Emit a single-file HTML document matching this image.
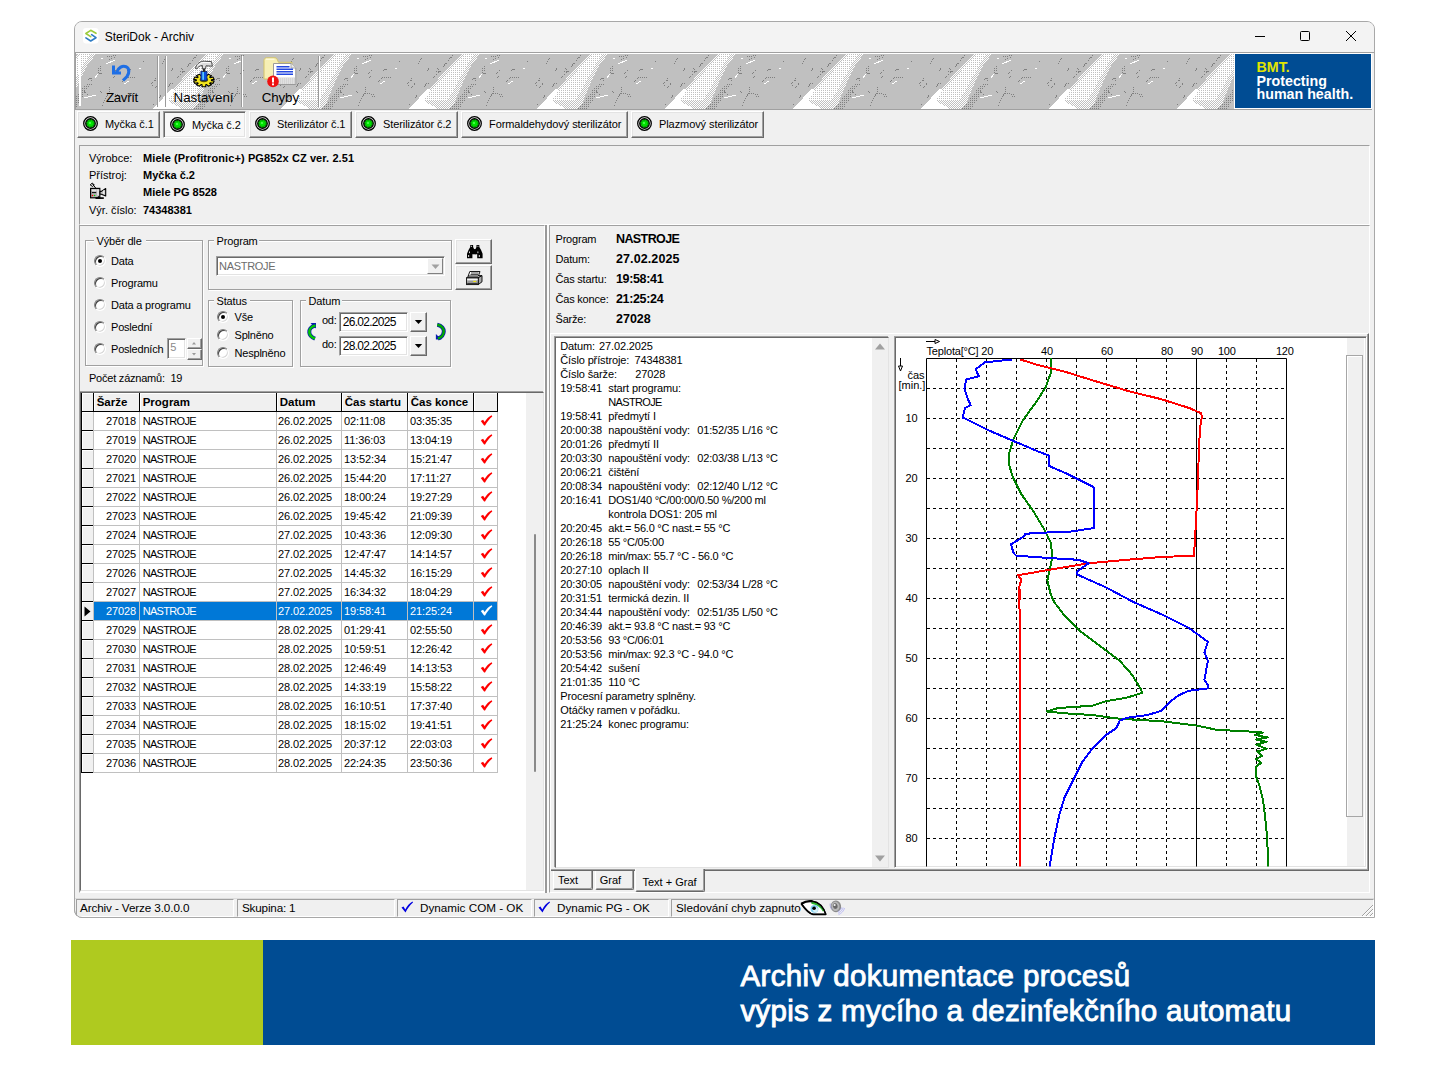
<!DOCTYPE html>
<html lang="cs"><head><meta charset="utf-8"><title>SteriDok - Archiv</title>
<style>
html,body{margin:0;padding:0;background:#fff;}
body{width:1448px;height:1080px;position:relative;overflow:hidden;font-family:"Liberation Sans",sans-serif;font-size:11px;color:#000;}
.t{position:absolute;white-space:pre;line-height:1;}
div{box-sizing:border-box;}
svg{position:absolute;overflow:visible;}
.win{position:absolute;left:74px;top:21px;width:1301px;height:897px;background:#f0f0f0;border:1px solid #a8a8a8;border-radius:8px 8px 0 7px;overflow:hidden;}
.raised{border:1px solid;border-color:#fff #696969 #696969 #fff;box-shadow:inset -1px -1px 0 #a0a0a0, inset 1px 1px 0 #e3e3e3;background:#f0f0f0;}
.sunken{border:1px solid;border-color:#a0a0a0 #fff #fff #a0a0a0;box-shadow:inset 1px 1px 0 #696969, inset -1px -1px 0 #e3e3e3;}
.grp{border:1px solid #a0a0a0;box-shadow:1px 1px 0 #fff, inset 1px 1px 0 #fff;}
.etch{border:1px solid;border-color:#a0a0a0 #fff #fff #a0a0a0;}
.radio{position:absolute;width:12px;height:12px;border-radius:50%;background:#fff;box-sizing:border-box;border:1px solid;border-color:#808080 #fff #fff #808080;box-shadow:inset 1px 1px 0 #404040, inset -1px -1px 0 #d8d8d8;transform:rotate(0deg);}
.radio.on:after{content:"";position:absolute;left:3px;top:3px;width:4px;height:4px;border-radius:50%;background:#000;}

.dfield{background:#fff;border:1px solid;border-color:#a0a0a0 #fff #fff #a0a0a0;box-shadow:inset 1px 1px 0 #696969, inset -1px -1px 0 #e3e3e3;}
.btn3{background:#f0f0f0;border:1px solid;border-color:#fff #696969 #696969 #fff;box-shadow:inset -1px -1px 0 #a0a0a0;}

</style></head>
<body>
<div class="" style="position:absolute;left:71px;top:940px;width:192px;height:105px;background:#afca1f;"></div>
<div class="" style="position:absolute;left:263px;top:940px;width:1112px;height:105px;background:#004c93;"></div>
<span class="t bn1" style="left:740.4px;top:960.53px;font-size:29.5px;letter-spacing:0.37px;color:#fff;-webkit-text-stroke:0.9px #fff;">Archiv dokumentace procesů</span>
<span class="t bn2" style="left:740.4px;top:995.53px;font-size:29.5px;letter-spacing:0.295px;color:#fff;-webkit-text-stroke:0.9px #fff;">výpis z mycího a dezinfekčního automatu</span>
<div class="win"></div>
<div class="" style="position:absolute;left:75px;top:22px;width:1299px;height:31px;background:#f3f3f3;border-radius:7px 7px 0 0;"></div>
<svg style="left:83px;top:28px" width="16" height="16" viewBox="0 0 16 16"><rect x="0" y="0" width="15.500" height="15.500" rx="3" fill="#fff"/><path d="M13 5.300L7.700 2.300L2.900 5.500L7.700 8.700" fill="none" stroke="#9ccc3c" stroke-width="1.600" stroke-linejoin="round" stroke-linecap="round"/><path d="M2.900 9.900L7.700 13L13 9.700L8.600 6.600" fill="none" stroke="#2e7cc4" stroke-width="1.600" stroke-linejoin="round" stroke-linecap="round"/></svg>
<span class="t " style="left:104.7px;top:30.64px;font-size:12px;">SteriDok - Archiv</span>
<svg style="left:1250px;top:26px" width="112" height="22" viewBox="0 0 112 22"><path d="M5 10.5H15" stroke="#000" stroke-width="1"/><rect x="50.5" y="5.5" width="9" height="9" rx="1" fill="none" stroke="#000" stroke-width="1"/><path d="M96 5L106 15M106 5L96 15" stroke="#000" stroke-width="1"/></svg>
<svg style="left:75px;top:54px" width="1299" height="55" viewBox="0 0 1299 55" shape-rendering="crispEdges">
<defs>
<pattern id="chk" width="2" height="2" patternUnits="userSpaceOnUse"><rect width="2" height="2" fill="#c0c0c0"/><rect width="1" height="1" fill="#fff"/><rect x="1" y="1" width="1" height="1" fill="#fff"/></pattern>
<pattern id="chk3" width="2" height="2" patternUnits="userSpaceOnUse"><rect width="2" height="2" fill="#fff"/><rect x="1" y="0" width="1" height="1" fill="#c0c0c0"/></pattern>
<pattern id="chd" width="2" height="2" patternUnits="userSpaceOnUse"><rect width="1" height="1" fill="#808080"/></pattern>
<pattern id="mar" x="69" y="0" width="128" height="55" patternUnits="userSpaceOnUse">
<rect width="128" height="55" fill="#c0c0c0"/>
<polygon points="9,55 14,50 62,0 80,0 71,12 63,28 54,50 50,55" fill="url(#chk)"/>
<polygon points="22,46 64,1 74,1 66,13 58,28 48,46" fill="url(#chk3)"/>
<polygon points="9,55 19,44 27,35 30,36 24,47 38,55" fill="#fff"/>
<polygon points="50,55 57,46 69,30 73,32 66,44 60,55" fill="url(#chd)"/>
<g stroke="#808080" stroke-width="1" fill="none" stroke-dasharray="1 1">
<path d="M18 9.500L23 3M27 17l2-3M33 24l4-4M24 33l3-4 2 1 2-2M43 13l10-12M15 44l2-3M9 51l2-1"/>
<path d="M37 14l3 3-3 3M36 17h5M7 30l4-4 4 4-4 4zM11 24v3"/>
<path d="M82 14v4l3 2 2-2M84 12l1 5M72 26l3-2 1 4M71 30h5M96 20l4-4M97 24l3-3M91 3l10-2M93 6l6-3"/>
<path d="M94 33l-1 5-7 14M93 39l10 2M99 40l2 4 3-2M84 37l2 2M68 37l4 4M111 17l3-2 1 2M127 8l4-1M106 28l4-4 9-1"/>
</g>
<g stroke="#fff" stroke-width="1" fill="none">
<path d="M85 5l2-1M90 10l9-4M79 24l3-4M68 44l12-3M108 30l5-3M123 14l2 1"/>
</g>
</pattern></defs>
<rect width="1299" height="55" fill="url(#mar)"/>
</svg>
<div class="" style="position:absolute;left:75px;top:52px;width:1299px;height:1px;background:#a0a0a0;"></div>
<div class="" style="position:absolute;left:75px;top:53px;width:1299px;height:1px;background:#fff;"></div>
<div class="" style="position:absolute;left:75px;top:109px;width:1299px;height:1px;background:#a0a0a0;"></div>
<div class="" style="position:absolute;left:79px;top:55px;width:2px;height:51px;background:#fff;"></div>
<div class="" style="position:absolute;left:75px;top:53px;width:1px;height:56px;background:#a0a0a0;"></div>
<div class="" style="position:absolute;left:157px;top:56px;width:1px;height:51px;background:#9a9a9a;"></div>
<div class="" style="position:absolute;left:158px;top:56px;width:1px;height:51px;background:#fff;"></div>
<div class="" style="position:absolute;left:165px;top:56px;width:1px;height:51px;background:#9a9a9a;"></div>
<div class="" style="position:absolute;left:166px;top:56px;width:1px;height:51px;background:#fff;"></div>
<div class="" style="position:absolute;left:241px;top:56px;width:1px;height:51px;background:#9a9a9a;"></div>
<div class="" style="position:absolute;left:242px;top:56px;width:1px;height:51px;background:#fff;"></div>
<div class="" style="position:absolute;left:318px;top:56px;width:1px;height:51px;background:#9a9a9a;"></div>
<div class="" style="position:absolute;left:319px;top:56px;width:1px;height:51px;background:#fff;"></div>
<span class="t " style="left:106px;top:91.22px;font-size:13.33px;letter-spacing:-0.35px;">Zavřít</span>
<span class="t " style="left:173.5px;top:91.22px;font-size:13.33px;">Nastavení</span>
<span class="t " style="left:261.7px;top:91.22px;font-size:13.33px;letter-spacing:-0.1px;">Chyby</span>
<svg style="left:111px;top:63px" width="20" height="20" viewBox="0 0 20 20"><path d="M2.500 2.400v7.600h7.500" fill="none" stroke="#1f6fe5" stroke-width="3"/><path d="M5.500 9.500C7.500 4.500 11.500 2.300 15 3.700C18.700 5.300 18.500 10 16 13.500L12 17.500" fill="none" stroke="#1f6fe5" stroke-width="3.100"/></svg>
<svg style="left:192px;top:59px" width="24" height="29" viewBox="0 0 24 29"><polygon points="10.0,14.7 13.8,14.7 13.7,16.6 14.7,16.8 16.3,15.2 19.5,16.7 17.6,18.1 18.3,18.7 21.0,18.0 22.2,20.4 19.4,20.8 19.4,21.6 22.2,22.0 21.0,24.4 18.3,23.7 17.6,24.3 19.5,25.7 16.3,27.2 14.7,25.6 13.7,25.8 13.8,27.7 10.0,27.7 10.1,25.8 9.1,25.6 7.5,27.2 4.3,25.7 6.2,24.3 5.5,23.7 2.8,24.4 1.6,22.0 4.4,21.6 4.4,20.8 1.6,20.4 2.8,18.0 5.5,18.7 6.2,18.1 4.3,16.7 7.5,15.2 9.1,16.8 10.1,16.6" fill="#f4e61e" stroke="#000" stroke-width="1.100" stroke-linejoin="round"/><ellipse cx="11.900" cy="20.800" rx="4.200" ry="2.400" fill="#5a5200"/><rect x="8.900" y="12.500" width="6" height="8.800" fill="#0a50e0" stroke="#06247a" stroke-width=".8"/><rect x="10.300" y="13" width="1.700" height="7.800" fill="#58c8ff"/><rect x="10.800" y="9" width="2.400" height="4" fill="#2a2a2a"/><path d="M3.500 9.500C4 5.500 7 2.800 11 2.200L19.500 2.600L20.400 7.200L14 6.800L13.600 9.800L10.400 9.800L10.400 6.500C8 6.500 5.800 8 4.800 10Z" fill="#dcdcdc" stroke="#3a3a3a" stroke-width=".9" stroke-linejoin="round"/><path d="M6 6.500C7.500 4.500 9.500 3.600 12 3.400L18.500 3.700" fill="none" stroke="#fff" stroke-width="1"/></svg>
<svg style="left:262px;top:56px" width="36" height="30" viewBox="0 0 36 30"><path d="M2 4.500c0-1.600 1-2.700 2.500-2.700h8.500c1.500 0 2 1 2.500 2.500l1 2h13.500v16.700H2z" fill="#f6efb4" stroke="#d4c466" stroke-width="1"/><path d="M4 3.200h8.500" stroke="#fffbe0" stroke-width="1.200"/><path d="M11.500 7.500h17.500l4.800 4.500v16.500H11.500z" fill="#fff" stroke="#9a9a9a" stroke-width="1"/><path d="M29 7.500v4.500h4.800" fill="#e8e8e8" stroke="#9a9a9a" stroke-width=".8"/><path d="M14.500 10.800h13M14.500 13.300h16.500M14.500 15.800h16.500M14.500 18.300h16.500" stroke="#2448e0" stroke-width="1.500"/><rect x="14" y="21.500" width="19" height="6.500" fill="#d4d4d4"/><path d="M15 23h17M15 25h17M15 27h17" stroke="#f4f4f4" stroke-width=".8" stroke-dasharray="1 1"/><circle cx="11" cy="25.400" r="5.800" fill="#ee1111"/><rect x="10" y="21.500" width="2" height="5" fill="#fff"/><rect x="10" y="27.400" width="2" height="1.900" fill="#fff"/></svg>
<div class="" style="position:absolute;left:1234px;top:53px;width:138px;height:56px;background:#004c93;border:1px solid #fff;"></div>
<div class="" style="position:absolute;left:1372px;top:53px;width:2px;height:57px;background:#f0f0f0;"></div>
<span class="t " style="left:1256.5px;top:59.74px;font-size:14.25px;font-weight:bold;color:#e2e600;">BMT.</span>
<span class="t " style="left:1256.5px;top:73.54px;font-size:14.25px;font-weight:bold;color:#fff;">Protecting</span>
<span class="t " style="left:1256.5px;top:87.34px;font-size:14.25px;font-weight:bold;color:#fff;">human health.</span>
<div class="raised" style="position:absolute;left:77px;top:111px;width:83px;height:27px;"></div>
<svg style="left:83px;top:116px" width="15" height="15" viewBox="0 0 15 15"><circle cx="7.500" cy="7.500" r="6.800" fill="#ececec" stroke="#000" stroke-width="1.300"/><circle cx="7.500" cy="7.500" r="4.700" fill="#0a8a0a" stroke="#000" stroke-width="1.400"/><circle cx="7.500" cy="7.500" r="3.500" fill="none" stroke="#00ff00" stroke-width=".9" stroke-dasharray="1.300 1.450"/><circle cx="7.500" cy="7.500" r="2.700" fill="#00e400"/><circle cx="7" cy="7" r="1" fill="#5aff5a"/></svg>
<span class="t " style="left:105px;top:118.69px;font-size:11px;letter-spacing:-0.08px;">Myčka č.1</span>
<div class="sunken" style="position:absolute;left:163px;top:111px;width:83px;height:27px;background:#f8f8f8;"></div>
<svg style="left:170px;top:117px" width="15" height="15" viewBox="0 0 15 15"><circle cx="7.500" cy="7.500" r="6.800" fill="#ececec" stroke="#000" stroke-width="1.300"/><circle cx="7.500" cy="7.500" r="4.700" fill="#0a8a0a" stroke="#000" stroke-width="1.400"/><circle cx="7.500" cy="7.500" r="3.500" fill="none" stroke="#00ff00" stroke-width=".9" stroke-dasharray="1.300 1.450"/><circle cx="7.500" cy="7.500" r="2.700" fill="#00e400"/><circle cx="7" cy="7" r="1" fill="#5aff5a"/></svg>
<span class="t " style="left:192px;top:120.19px;font-size:11px;letter-spacing:-0.08px;">Myčka č.2</span>
<div class="raised" style="position:absolute;left:249px;top:111px;width:103px;height:27px;"></div>
<svg style="left:255px;top:116px" width="15" height="15" viewBox="0 0 15 15"><circle cx="7.500" cy="7.500" r="6.800" fill="#ececec" stroke="#000" stroke-width="1.300"/><circle cx="7.500" cy="7.500" r="4.700" fill="#0a8a0a" stroke="#000" stroke-width="1.400"/><circle cx="7.500" cy="7.500" r="3.500" fill="none" stroke="#00ff00" stroke-width=".9" stroke-dasharray="1.300 1.450"/><circle cx="7.500" cy="7.500" r="2.700" fill="#00e400"/><circle cx="7" cy="7" r="1" fill="#5aff5a"/></svg>
<span class="t " style="left:277px;top:118.69px;font-size:11px;letter-spacing:-0.08px;">Sterilizátor č.1</span>
<div class="raised" style="position:absolute;left:355px;top:111px;width:103px;height:27px;"></div>
<svg style="left:361px;top:116px" width="15" height="15" viewBox="0 0 15 15"><circle cx="7.500" cy="7.500" r="6.800" fill="#ececec" stroke="#000" stroke-width="1.300"/><circle cx="7.500" cy="7.500" r="4.700" fill="#0a8a0a" stroke="#000" stroke-width="1.400"/><circle cx="7.500" cy="7.500" r="3.500" fill="none" stroke="#00ff00" stroke-width=".9" stroke-dasharray="1.300 1.450"/><circle cx="7.500" cy="7.500" r="2.700" fill="#00e400"/><circle cx="7" cy="7" r="1" fill="#5aff5a"/></svg>
<span class="t " style="left:383px;top:118.69px;font-size:11px;letter-spacing:-0.08px;">Sterilizátor č.2</span>
<div class="raised" style="position:absolute;left:461px;top:111px;width:167px;height:27px;"></div>
<svg style="left:467px;top:116px" width="15" height="15" viewBox="0 0 15 15"><circle cx="7.500" cy="7.500" r="6.800" fill="#ececec" stroke="#000" stroke-width="1.300"/><circle cx="7.500" cy="7.500" r="4.700" fill="#0a8a0a" stroke="#000" stroke-width="1.400"/><circle cx="7.500" cy="7.500" r="3.500" fill="none" stroke="#00ff00" stroke-width=".9" stroke-dasharray="1.300 1.450"/><circle cx="7.500" cy="7.500" r="2.700" fill="#00e400"/><circle cx="7" cy="7" r="1" fill="#5aff5a"/></svg>
<span class="t " style="left:489px;top:118.69px;font-size:11px;letter-spacing:-0.08px;">Formaldehydový sterilizátor</span>
<div class="raised" style="position:absolute;left:631px;top:111px;width:133px;height:27px;"></div>
<svg style="left:637px;top:116px" width="15" height="15" viewBox="0 0 15 15"><circle cx="7.500" cy="7.500" r="6.800" fill="#ececec" stroke="#000" stroke-width="1.300"/><circle cx="7.500" cy="7.500" r="4.700" fill="#0a8a0a" stroke="#000" stroke-width="1.400"/><circle cx="7.500" cy="7.500" r="3.500" fill="none" stroke="#00ff00" stroke-width=".9" stroke-dasharray="1.300 1.450"/><circle cx="7.500" cy="7.500" r="2.700" fill="#00e400"/><circle cx="7" cy="7" r="1" fill="#5aff5a"/></svg>
<span class="t " style="left:659px;top:118.69px;font-size:11px;letter-spacing:-0.08px;">Plazmový sterilizátor</span>
<div class="etch" style="position:absolute;left:79px;top:145px;width:1291px;height:80px;"></div>
<span class="t " style="left:89px;top:152.69px;font-size:11px;">Výrobce:</span>
<span class="t " style="left:143px;top:152.69px;font-size:11px;letter-spacing:0.09px;font-weight:bold;">Miele (Profitronic+) PG852x CZ ver. 2.51</span>
<span class="t " style="left:89px;top:169.69px;font-size:11px;">Přístroj:</span>
<span class="t " style="left:143px;top:169.69px;font-size:11px;font-weight:bold;">Myčka č.2</span>
<span class="t " style="left:143px;top:186.69px;font-size:11px;font-weight:bold;">Miele PG 8528</span>
<span class="t " style="left:89px;top:204.69px;font-size:11px;">Výr. číslo:</span>
<span class="t " style="left:143px;top:204.69px;font-size:11px;font-weight:bold;">74348381</span>
<svg style="left:89px;top:182px" width="18" height="18" viewBox="0 0 18 18"><path d="M6.800 6.200L3.400 1.800M1.200 2.900L3.300 1L5.200 3L3.600 4.500z" fill="none" stroke="#000" stroke-width="1"/><rect x="1.600" y="6.400" width="9.200" height="9.400" fill="#b4b4b4" stroke="#000" stroke-width="1.200"/><rect x="2.800" y="7.600" width="4.600" height="1.600" fill="#e4e4e4"/><rect x="8" y="7.400" width="2.200" height="6" fill="#dedede"/><path d="M3 10.600h4.200" stroke="#000" stroke-width="1"/><circle cx="3.500" cy="13.500" r=".8" fill="#f00"/><circle cx="5.600" cy="13.500" r=".8" fill="#0c0"/><path d="M11 9.400h1.400l4.300-2.900v7.400l-4.300-1.700H11z" fill="#c4c4c4" stroke="#000" stroke-width="1.100" stroke-linejoin="round"/><path d="M14.800 8.300v3.800" stroke="#fff" stroke-width="1"/><path d="M6.500 16.100h8.300" stroke="#000" stroke-width="1.700"/><path d="M9 14.500l2 1.500" stroke="#000" stroke-width="1.200"/></svg>
<div class="etch" style="position:absolute;left:79px;top:225px;width:466px;height:668px;"></div>
<div class="" style="position:absolute;left:545px;top:225px;width:2px;height:668px;background:#999;"></div>
<div class="" style="position:absolute;left:547px;top:225px;width:2px;height:668px;background:#fbfbfb;"></div>
<div class="grp" style="position:absolute;left:85px;top:240px;width:118px;height:126px;"></div>
<div class="" style="position:absolute;left:94.0px;top:238px;width:52px;height:5px;background:#f0f0f0;"></div>
<span class="t " style="left:96.5px;top:235.69px;font-size:11px;letter-spacing:-0.15px;">Výběr dle</span>
<div class="radio on" style="left:94px;top:255px"></div>
<span class="t " style="left:111px;top:255.69px;font-size:11px;letter-spacing:-0.2px;">Data</span>
<div class="radio" style="left:94px;top:277px"></div>
<span class="t " style="left:111px;top:277.69px;font-size:11px;letter-spacing:-0.2px;">Programu</span>
<div class="radio" style="left:94px;top:299px"></div>
<span class="t " style="left:111px;top:299.69px;font-size:11px;letter-spacing:-0.2px;">Data a programu</span>
<div class="radio" style="left:94px;top:321px"></div>
<span class="t " style="left:111px;top:321.69px;font-size:11px;letter-spacing:-0.2px;">Poslední</span>
<div class="radio" style="left:94px;top:343px"></div>
<span class="t " style="left:111px;top:343.69px;font-size:11px;letter-spacing:-0.2px;">Posledních</span>
<div class="dfield" style="position:absolute;left:167px;top:338px;width:19px;height:21px;"></div>
<span class="t " style="left:170.3px;top:342.39px;font-size:11px;color:#8a8a8a;">5</span>
<div class="btn3" style="position:absolute;left:187px;top:338px;width:15px;height:11px;"></div>
<div class="btn3" style="position:absolute;left:187px;top:349px;width:15px;height:11px;"></div>
<svg style="left:187px;top:338px" width="15" height="22" viewBox="0 0 15 22"><path d="M5 6.500h4l-2-2.500z" fill="#9a9a9a"/><path d="M5 15h4l-2 2.500z" fill="#9a9a9a"/></svg>
<div class="grp" style="position:absolute;left:208px;top:240px;width:244px;height:50px;"></div>
<div class="" style="position:absolute;left:214.0px;top:238px;width:45px;height:5px;background:#f0f0f0;"></div>
<span class="t " style="left:216.5px;top:235.69px;font-size:11px;letter-spacing:-0.15px;">Program</span>
<div class="dfield" style="position:absolute;left:216px;top:256px;width:229px;height:20px;"></div>
<span class="t " style="left:219px;top:260.69px;font-size:11px;letter-spacing:-0.3px;color:#6d6d6d;">NASTROJE</span>
<div class="" style="position:absolute;left:427px;top:258px;width:16px;height:16px;background:#f0f0f0;border:1px solid;border-color:#fff #808080 #808080 #fff;"></div>
<svg style="left:427px;top:258px" width="16" height="16" viewBox="0 0 16 16"><path d="M4.500 6.500h8l-4 4.500z" fill="#a0a0a0"/></svg>
<div class="raised" style="position:absolute;left:455px;top:239px;width:37px;height:25px;"></div>
<div class="raised" style="position:absolute;left:455px;top:265px;width:37px;height:25px;"></div>
<svg style="left:466.600px;top:244.800px" width="15.600" height="13.200" viewBox="0 0 15.300 12.900"><path d="M3.200 0H6V2L7.400 5V9H5.300V12.900H0V8.500L1.500 5L3.200 2Z" fill="#000"/><path d="M12.100 0H9.300V2L7.900 5V9H10V12.900H15.300V8.500L13.800 5L12.100 2Z" fill="#000"/><rect x="6.500" y="4" width="2.400" height="5" fill="#000"/><rect x="1.200" y="9.800" width=".9" height="1.900" fill="#fff"/><rect x="2.100" y="6.300" width=".8" height="1.700" fill="#fff"/><rect x="4" y=".8" width=".9" height=".9" fill="#fff"/><rect x="11.600" y="9.800" width=".9" height="1.900" fill="#fff"/><rect x="10.300" y="6.300" width=".8" height="1.700" fill="#fff"/><rect x="10.300" y=".8" width=".9" height=".9" fill="#fff"/></svg>
<svg style="left:466px;top:271px" width="17" height="15" viewBox="0 0 17 15"><path d="M.6 6.800L3 4.600H16L12.200 6.800z" fill="#e0e0e0" stroke="#000" stroke-width=".9" stroke-linejoin="round"/><path d="M12.200 6.800L16 4.600V10.800L12.200 13.600z" fill="#a8a8a8" stroke="#000" stroke-width=".9" stroke-linejoin="round"/><rect x=".6" y="6.800" width="11.600" height="6.800" fill="#c4c4c4" stroke="#000" stroke-width=".9"/><path d="M3.800 .5H14L12.400 5H2.200z" fill="#fff" stroke="#000" stroke-width=".9" stroke-linejoin="round"/><path d="M5 2h7.500M4.500 3.500h7.500" stroke="#000" stroke-width=".7"/><path d="M1.200 8.600h10.500" stroke="#fff" stroke-width=".9"/><rect x="1.500" y="9.800" width="9.800" height="1.400" fill="#9a9a9a"/><rect x="7.200" y="9.900" width="2.900" height="1" fill="#f4e800"/><path d="M1.200 12.300h10.500" stroke="#000" stroke-width=".9"/></svg>
<div class="grp" style="position:absolute;left:208px;top:300px;width:85px;height:67px;"></div>
<div class="" style="position:absolute;left:214.0px;top:298px;width:36px;height:5px;background:#f0f0f0;"></div>
<span class="t " style="left:216.5px;top:295.69px;font-size:11px;letter-spacing:-0.15px;">Status</span>
<div class="radio on" style="left:217px;top:311px"></div>
<span class="t " style="left:234.5px;top:311.69px;font-size:11px;letter-spacing:-0.2px;">Vše</span>
<div class="radio" style="left:217px;top:329px"></div>
<span class="t " style="left:234.5px;top:329.69px;font-size:11px;letter-spacing:-0.2px;">Splněno</span>
<div class="radio" style="left:217px;top:347px"></div>
<span class="t " style="left:234.5px;top:347.69px;font-size:11px;letter-spacing:-0.2px;">Nesplněno</span>
<div class="grp" style="position:absolute;left:300px;top:300px;width:151px;height:67px;"></div>
<div class="" style="position:absolute;left:306.0px;top:298px;width:36px;height:5px;background:#f0f0f0;"></div>
<span class="t " style="left:308.5px;top:295.69px;font-size:11px;letter-spacing:-0.15px;">Datum</span>
<span class="t " style="left:322px;top:315.19px;font-size:11px;letter-spacing:-0.3px;">od:</span>
<span class="t " style="left:322px;top:339.19px;font-size:11px;letter-spacing:-0.3px;">do:</span>
<div class="dfield" style="position:absolute;left:339px;top:312px;width:69px;height:20px;"></div>
<span class="t " style="left:342.7px;top:316.34px;font-size:12px;letter-spacing:-0.7px;">26.02.2025</span>
<div class="btn3" style="position:absolute;left:410px;top:312px;width:17px;height:20px;"></div>
<svg style="left:410px;top:312px" width="17" height="20" viewBox="0 0 17 20"><path d="M4.800 8h7.400l-3.700 4z" fill="#000"/></svg>
<div class="dfield" style="position:absolute;left:339px;top:336px;width:69px;height:20px;"></div>
<span class="t " style="left:342.7px;top:340.34px;font-size:12px;letter-spacing:-0.7px;">28.02.2025</span>
<div class="btn3" style="position:absolute;left:410px;top:336px;width:17px;height:20px;"></div>
<svg style="left:410px;top:336px" width="17" height="20" viewBox="0 0 17 20"><path d="M4.800 8h7.400l-3.700 4z" fill="#000"/></svg>
<svg style="left:307px;top:322px" width="11" height="19" viewBox="0 0 11 19"><path d="M3.500 1H9V6.500z" fill="#0a1ab0"/><path d="M8.500 3.500C3.500 4.500 2 8 2.300 10.500C2.600 13.500 5 15.500 8 16.700" fill="none" stroke="#0a1ab0" stroke-width="4"/><path d="M8.500 3.500C3.500 4.500 2 8 2.300 10.500C2.600 13.500 5 15.500 8 16.700" fill="none" stroke="#00c800" stroke-width="2.400"/></svg>
<svg style="left:435px;top:322px" width="11" height="19" viewBox="0 0 11 19"><path d="M.9 12V17.500H6.500z" fill="#0a1ab0"/><path d="M2.300 2.700C7 3.500 9 7 8.800 9.500C8.600 13 6 15.500 3 16.500" fill="none" stroke="#0a1ab0" stroke-width="4"/><path d="M2.300 2.700C7 3.500 9 7 8.800 9.500C8.600 13 6 15.500 3 16.500" fill="none" stroke="#00a800" stroke-width="2.400"/></svg>
<span class="t " style="left:89px;top:373.19px;font-size:11px;letter-spacing:-0.22px;">Počet záznamů:  19</span>
<div class="" style="position:absolute;left:80px;top:392px;width:464px;height:499px;background:#fff;border:1px solid;border-color:#696969 #e3e3e3 #e3e3e3 #696969;box-shadow:-1px -1px 0 #a0a0a0, 1px 1px 0 #fff;"></div>
<div class="" style="position:absolute;left:526px;top:393px;width:17px;height:497px;background:#f0f0f0;"></div>
<div class="" style="position:absolute;left:534px;top:534px;width:2px;height:238px;background:#8a8a8a;border-radius:1px;"></div>
<div class="" style="position:absolute;left:81px;top:393px;width:13px;height:19px;background:#f0f0f0;border:1px solid #000;border-top:0;box-shadow:inset 1px 1px 0 #fff;"></div>
<div class="" style="position:absolute;left:93px;top:393px;width:47px;height:19px;background:#f0f0f0;border:1px solid #000;border-top:0;box-shadow:inset 1px 1px 0 #fff;"></div>
<span class="t " style="left:96.7px;top:396.57px;font-size:11.5px;font-weight:bold;">Šarže</span>
<div class="" style="position:absolute;left:139px;top:393px;width:138px;height:19px;background:#f0f0f0;border:1px solid #000;border-top:0;box-shadow:inset 1px 1px 0 #fff;"></div>
<span class="t " style="left:142.7px;top:396.57px;font-size:11.5px;font-weight:bold;">Program</span>
<div class="" style="position:absolute;left:276px;top:393px;width:66px;height:19px;background:#f0f0f0;border:1px solid #000;border-top:0;box-shadow:inset 1px 1px 0 #fff;"></div>
<span class="t " style="left:279.7px;top:396.57px;font-size:11.5px;font-weight:bold;">Datum</span>
<div class="" style="position:absolute;left:341px;top:393px;width:67px;height:19px;background:#f0f0f0;border:1px solid #000;border-top:0;box-shadow:inset 1px 1px 0 #fff;"></div>
<span class="t " style="left:344.7px;top:396.57px;font-size:11.5px;font-weight:bold;">Čas startu</span>
<div class="" style="position:absolute;left:407px;top:393px;width:67px;height:19px;background:#f0f0f0;border:1px solid #000;border-top:0;box-shadow:inset 1px 1px 0 #fff;"></div>
<span class="t " style="left:410.7px;top:396.57px;font-size:11.5px;font-weight:bold;">Čas konce</span>
<div class="" style="position:absolute;left:473px;top:393px;width:25px;height:19px;background:#f0f0f0;border:1px solid #000;border-top:0;box-shadow:inset 1px 1px 0 #fff;"></div>
<div class="" style="position:absolute;left:81px;top:411px;width:13px;height:20px;background:#f0f0f0;border:1px solid #000;box-shadow:inset 1px 1px 0 #fff;"></div>
<div class="" style="position:absolute;left:93px;top:411px;width:47px;height:20px;border:1px solid #c0c0c0;border-top-color:#c0c0c0;"></div>
<div class="" style="position:absolute;left:139px;top:411px;width:138px;height:20px;border:1px solid #c0c0c0;border-top-color:#c0c0c0;"></div>
<div class="" style="position:absolute;left:276px;top:411px;width:66px;height:20px;border:1px solid #c0c0c0;border-top-color:#c0c0c0;"></div>
<div class="" style="position:absolute;left:341px;top:411px;width:67px;height:20px;border:1px solid #c0c0c0;border-top-color:#c0c0c0;"></div>
<div class="" style="position:absolute;left:407px;top:411px;width:67px;height:20px;border:1px solid #c0c0c0;border-top-color:#c0c0c0;"></div>
<div class="" style="position:absolute;left:473px;top:411px;width:25px;height:20px;border:1px solid #c0c0c0;border-top-color:#c0c0c0;"></div>
<span class="t " style="left:136px;top:415.69px;font-size:11px;letter-spacing:-0.1px;transform:translateX(-100%);">27018</span>
<span class="t " style="left:142.7px;top:415.69px;font-size:11px;letter-spacing:-0.68px;">NASTROJE</span>
<span class="t " style="left:278px;top:415.69px;font-size:11px;letter-spacing:-0.1px;">26.02.2025</span>
<span class="t " style="left:344px;top:415.69px;font-size:11px;letter-spacing:-0.1px;">02:11:08</span>
<span class="t " style="left:410px;top:415.69px;font-size:11px;letter-spacing:-0.1px;">03:35:35</span>
<svg style="left:479.500px;top:414.8px" width="12.600" height="10.600" viewBox="0 0 13 12" preserveAspectRatio="none"><path d="M0.800 6.800l2.400-1.500 1.600 2.600C6.500 4.500 9 1.800 12 0.200l0.700 1.400C9.800 4 7.500 7.500 5.200 11.800h-1z" fill="#f00"/></svg>
<div class="" style="position:absolute;left:81px;top:430px;width:13px;height:20px;background:#f0f0f0;border:1px solid #000;box-shadow:inset 1px 1px 0 #fff;"></div>
<div class="" style="position:absolute;left:93px;top:430px;width:47px;height:20px;border:1px solid #c0c0c0;border-top-color:#c0c0c0;"></div>
<div class="" style="position:absolute;left:139px;top:430px;width:138px;height:20px;border:1px solid #c0c0c0;border-top-color:#c0c0c0;"></div>
<div class="" style="position:absolute;left:276px;top:430px;width:66px;height:20px;border:1px solid #c0c0c0;border-top-color:#c0c0c0;"></div>
<div class="" style="position:absolute;left:341px;top:430px;width:67px;height:20px;border:1px solid #c0c0c0;border-top-color:#c0c0c0;"></div>
<div class="" style="position:absolute;left:407px;top:430px;width:67px;height:20px;border:1px solid #c0c0c0;border-top-color:#c0c0c0;"></div>
<div class="" style="position:absolute;left:473px;top:430px;width:25px;height:20px;border:1px solid #c0c0c0;border-top-color:#c0c0c0;"></div>
<span class="t " style="left:136px;top:434.69px;font-size:11px;letter-spacing:-0.1px;transform:translateX(-100%);">27019</span>
<span class="t " style="left:142.7px;top:434.69px;font-size:11px;letter-spacing:-0.68px;">NASTROJE</span>
<span class="t " style="left:278px;top:434.69px;font-size:11px;letter-spacing:-0.1px;">26.02.2025</span>
<span class="t " style="left:344px;top:434.69px;font-size:11px;letter-spacing:-0.1px;">11:36:03</span>
<span class="t " style="left:410px;top:434.69px;font-size:11px;letter-spacing:-0.1px;">13:04:19</span>
<svg style="left:479.500px;top:433.8px" width="12.600" height="10.600" viewBox="0 0 13 12" preserveAspectRatio="none"><path d="M0.800 6.800l2.400-1.500 1.600 2.600C6.500 4.500 9 1.800 12 0.200l0.700 1.400C9.800 4 7.500 7.500 5.200 11.800h-1z" fill="#f00"/></svg>
<div class="" style="position:absolute;left:81px;top:449px;width:13px;height:20px;background:#f0f0f0;border:1px solid #000;box-shadow:inset 1px 1px 0 #fff;"></div>
<div class="" style="position:absolute;left:93px;top:449px;width:47px;height:20px;border:1px solid #c0c0c0;border-top-color:#c0c0c0;"></div>
<div class="" style="position:absolute;left:139px;top:449px;width:138px;height:20px;border:1px solid #c0c0c0;border-top-color:#c0c0c0;"></div>
<div class="" style="position:absolute;left:276px;top:449px;width:66px;height:20px;border:1px solid #c0c0c0;border-top-color:#c0c0c0;"></div>
<div class="" style="position:absolute;left:341px;top:449px;width:67px;height:20px;border:1px solid #c0c0c0;border-top-color:#c0c0c0;"></div>
<div class="" style="position:absolute;left:407px;top:449px;width:67px;height:20px;border:1px solid #c0c0c0;border-top-color:#c0c0c0;"></div>
<div class="" style="position:absolute;left:473px;top:449px;width:25px;height:20px;border:1px solid #c0c0c0;border-top-color:#c0c0c0;"></div>
<span class="t " style="left:136px;top:453.69px;font-size:11px;letter-spacing:-0.1px;transform:translateX(-100%);">27020</span>
<span class="t " style="left:142.7px;top:453.69px;font-size:11px;letter-spacing:-0.68px;">NASTROJE</span>
<span class="t " style="left:278px;top:453.69px;font-size:11px;letter-spacing:-0.1px;">26.02.2025</span>
<span class="t " style="left:344px;top:453.69px;font-size:11px;letter-spacing:-0.1px;">13:52:34</span>
<span class="t " style="left:410px;top:453.69px;font-size:11px;letter-spacing:-0.1px;">15:21:47</span>
<svg style="left:479.500px;top:452.8px" width="12.600" height="10.600" viewBox="0 0 13 12" preserveAspectRatio="none"><path d="M0.800 6.800l2.400-1.500 1.600 2.600C6.500 4.500 9 1.800 12 0.200l0.700 1.400C9.800 4 7.500 7.500 5.200 11.800h-1z" fill="#f00"/></svg>
<div class="" style="position:absolute;left:81px;top:468px;width:13px;height:20px;background:#f0f0f0;border:1px solid #000;box-shadow:inset 1px 1px 0 #fff;"></div>
<div class="" style="position:absolute;left:93px;top:468px;width:47px;height:20px;border:1px solid #c0c0c0;border-top-color:#c0c0c0;"></div>
<div class="" style="position:absolute;left:139px;top:468px;width:138px;height:20px;border:1px solid #c0c0c0;border-top-color:#c0c0c0;"></div>
<div class="" style="position:absolute;left:276px;top:468px;width:66px;height:20px;border:1px solid #c0c0c0;border-top-color:#c0c0c0;"></div>
<div class="" style="position:absolute;left:341px;top:468px;width:67px;height:20px;border:1px solid #c0c0c0;border-top-color:#c0c0c0;"></div>
<div class="" style="position:absolute;left:407px;top:468px;width:67px;height:20px;border:1px solid #c0c0c0;border-top-color:#c0c0c0;"></div>
<div class="" style="position:absolute;left:473px;top:468px;width:25px;height:20px;border:1px solid #c0c0c0;border-top-color:#c0c0c0;"></div>
<span class="t " style="left:136px;top:472.69px;font-size:11px;letter-spacing:-0.1px;transform:translateX(-100%);">27021</span>
<span class="t " style="left:142.7px;top:472.69px;font-size:11px;letter-spacing:-0.68px;">NASTROJE</span>
<span class="t " style="left:278px;top:472.69px;font-size:11px;letter-spacing:-0.1px;">26.02.2025</span>
<span class="t " style="left:344px;top:472.69px;font-size:11px;letter-spacing:-0.1px;">15:44:20</span>
<span class="t " style="left:410px;top:472.69px;font-size:11px;letter-spacing:-0.1px;">17:11:27</span>
<svg style="left:479.500px;top:471.8px" width="12.600" height="10.600" viewBox="0 0 13 12" preserveAspectRatio="none"><path d="M0.800 6.800l2.400-1.500 1.600 2.600C6.500 4.500 9 1.800 12 0.200l0.700 1.400C9.800 4 7.500 7.500 5.200 11.800h-1z" fill="#f00"/></svg>
<div class="" style="position:absolute;left:81px;top:487px;width:13px;height:20px;background:#f0f0f0;border:1px solid #000;box-shadow:inset 1px 1px 0 #fff;"></div>
<div class="" style="position:absolute;left:93px;top:487px;width:47px;height:20px;border:1px solid #c0c0c0;border-top-color:#c0c0c0;"></div>
<div class="" style="position:absolute;left:139px;top:487px;width:138px;height:20px;border:1px solid #c0c0c0;border-top-color:#c0c0c0;"></div>
<div class="" style="position:absolute;left:276px;top:487px;width:66px;height:20px;border:1px solid #c0c0c0;border-top-color:#c0c0c0;"></div>
<div class="" style="position:absolute;left:341px;top:487px;width:67px;height:20px;border:1px solid #c0c0c0;border-top-color:#c0c0c0;"></div>
<div class="" style="position:absolute;left:407px;top:487px;width:67px;height:20px;border:1px solid #c0c0c0;border-top-color:#c0c0c0;"></div>
<div class="" style="position:absolute;left:473px;top:487px;width:25px;height:20px;border:1px solid #c0c0c0;border-top-color:#c0c0c0;"></div>
<span class="t " style="left:136px;top:491.69px;font-size:11px;letter-spacing:-0.1px;transform:translateX(-100%);">27022</span>
<span class="t " style="left:142.7px;top:491.69px;font-size:11px;letter-spacing:-0.68px;">NASTROJE</span>
<span class="t " style="left:278px;top:491.69px;font-size:11px;letter-spacing:-0.1px;">26.02.2025</span>
<span class="t " style="left:344px;top:491.69px;font-size:11px;letter-spacing:-0.1px;">18:00:24</span>
<span class="t " style="left:410px;top:491.69px;font-size:11px;letter-spacing:-0.1px;">19:27:29</span>
<svg style="left:479.500px;top:490.8px" width="12.600" height="10.600" viewBox="0 0 13 12" preserveAspectRatio="none"><path d="M0.800 6.800l2.400-1.500 1.600 2.600C6.500 4.500 9 1.800 12 0.200l0.700 1.400C9.800 4 7.500 7.500 5.200 11.800h-1z" fill="#f00"/></svg>
<div class="" style="position:absolute;left:81px;top:506px;width:13px;height:20px;background:#f0f0f0;border:1px solid #000;box-shadow:inset 1px 1px 0 #fff;"></div>
<div class="" style="position:absolute;left:93px;top:506px;width:47px;height:20px;border:1px solid #c0c0c0;border-top-color:#c0c0c0;"></div>
<div class="" style="position:absolute;left:139px;top:506px;width:138px;height:20px;border:1px solid #c0c0c0;border-top-color:#c0c0c0;"></div>
<div class="" style="position:absolute;left:276px;top:506px;width:66px;height:20px;border:1px solid #c0c0c0;border-top-color:#c0c0c0;"></div>
<div class="" style="position:absolute;left:341px;top:506px;width:67px;height:20px;border:1px solid #c0c0c0;border-top-color:#c0c0c0;"></div>
<div class="" style="position:absolute;left:407px;top:506px;width:67px;height:20px;border:1px solid #c0c0c0;border-top-color:#c0c0c0;"></div>
<div class="" style="position:absolute;left:473px;top:506px;width:25px;height:20px;border:1px solid #c0c0c0;border-top-color:#c0c0c0;"></div>
<span class="t " style="left:136px;top:510.69px;font-size:11px;letter-spacing:-0.1px;transform:translateX(-100%);">27023</span>
<span class="t " style="left:142.7px;top:510.69px;font-size:11px;letter-spacing:-0.68px;">NASTROJE</span>
<span class="t " style="left:278px;top:510.69px;font-size:11px;letter-spacing:-0.1px;">26.02.2025</span>
<span class="t " style="left:344px;top:510.69px;font-size:11px;letter-spacing:-0.1px;">19:45:42</span>
<span class="t " style="left:410px;top:510.69px;font-size:11px;letter-spacing:-0.1px;">21:09:39</span>
<svg style="left:479.500px;top:509.8px" width="12.600" height="10.600" viewBox="0 0 13 12" preserveAspectRatio="none"><path d="M0.800 6.800l2.400-1.500 1.600 2.600C6.500 4.500 9 1.800 12 0.200l0.700 1.400C9.800 4 7.500 7.500 5.200 11.800h-1z" fill="#f00"/></svg>
<div class="" style="position:absolute;left:81px;top:525px;width:13px;height:20px;background:#f0f0f0;border:1px solid #000;box-shadow:inset 1px 1px 0 #fff;"></div>
<div class="" style="position:absolute;left:93px;top:525px;width:47px;height:20px;border:1px solid #c0c0c0;border-top-color:#c0c0c0;"></div>
<div class="" style="position:absolute;left:139px;top:525px;width:138px;height:20px;border:1px solid #c0c0c0;border-top-color:#c0c0c0;"></div>
<div class="" style="position:absolute;left:276px;top:525px;width:66px;height:20px;border:1px solid #c0c0c0;border-top-color:#c0c0c0;"></div>
<div class="" style="position:absolute;left:341px;top:525px;width:67px;height:20px;border:1px solid #c0c0c0;border-top-color:#c0c0c0;"></div>
<div class="" style="position:absolute;left:407px;top:525px;width:67px;height:20px;border:1px solid #c0c0c0;border-top-color:#c0c0c0;"></div>
<div class="" style="position:absolute;left:473px;top:525px;width:25px;height:20px;border:1px solid #c0c0c0;border-top-color:#c0c0c0;"></div>
<span class="t " style="left:136px;top:529.69px;font-size:11px;letter-spacing:-0.1px;transform:translateX(-100%);">27024</span>
<span class="t " style="left:142.7px;top:529.69px;font-size:11px;letter-spacing:-0.68px;">NASTROJE</span>
<span class="t " style="left:278px;top:529.69px;font-size:11px;letter-spacing:-0.1px;">27.02.2025</span>
<span class="t " style="left:344px;top:529.69px;font-size:11px;letter-spacing:-0.1px;">10:43:36</span>
<span class="t " style="left:410px;top:529.69px;font-size:11px;letter-spacing:-0.1px;">12:09:30</span>
<svg style="left:479.500px;top:528.8px" width="12.600" height="10.600" viewBox="0 0 13 12" preserveAspectRatio="none"><path d="M0.800 6.800l2.400-1.500 1.600 2.600C6.500 4.500 9 1.800 12 0.200l0.700 1.400C9.800 4 7.500 7.500 5.200 11.800h-1z" fill="#f00"/></svg>
<div class="" style="position:absolute;left:81px;top:544px;width:13px;height:20px;background:#f0f0f0;border:1px solid #000;box-shadow:inset 1px 1px 0 #fff;"></div>
<div class="" style="position:absolute;left:93px;top:544px;width:47px;height:20px;border:1px solid #c0c0c0;border-top-color:#c0c0c0;"></div>
<div class="" style="position:absolute;left:139px;top:544px;width:138px;height:20px;border:1px solid #c0c0c0;border-top-color:#c0c0c0;"></div>
<div class="" style="position:absolute;left:276px;top:544px;width:66px;height:20px;border:1px solid #c0c0c0;border-top-color:#c0c0c0;"></div>
<div class="" style="position:absolute;left:341px;top:544px;width:67px;height:20px;border:1px solid #c0c0c0;border-top-color:#c0c0c0;"></div>
<div class="" style="position:absolute;left:407px;top:544px;width:67px;height:20px;border:1px solid #c0c0c0;border-top-color:#c0c0c0;"></div>
<div class="" style="position:absolute;left:473px;top:544px;width:25px;height:20px;border:1px solid #c0c0c0;border-top-color:#c0c0c0;"></div>
<span class="t " style="left:136px;top:548.69px;font-size:11px;letter-spacing:-0.1px;transform:translateX(-100%);">27025</span>
<span class="t " style="left:142.7px;top:548.69px;font-size:11px;letter-spacing:-0.68px;">NASTROJE</span>
<span class="t " style="left:278px;top:548.69px;font-size:11px;letter-spacing:-0.1px;">27.02.2025</span>
<span class="t " style="left:344px;top:548.69px;font-size:11px;letter-spacing:-0.1px;">12:47:47</span>
<span class="t " style="left:410px;top:548.69px;font-size:11px;letter-spacing:-0.1px;">14:14:57</span>
<svg style="left:479.500px;top:547.8px" width="12.600" height="10.600" viewBox="0 0 13 12" preserveAspectRatio="none"><path d="M0.800 6.800l2.400-1.500 1.600 2.600C6.500 4.500 9 1.800 12 0.200l0.700 1.400C9.800 4 7.500 7.500 5.200 11.800h-1z" fill="#f00"/></svg>
<div class="" style="position:absolute;left:81px;top:563px;width:13px;height:20px;background:#f0f0f0;border:1px solid #000;box-shadow:inset 1px 1px 0 #fff;"></div>
<div class="" style="position:absolute;left:93px;top:563px;width:47px;height:20px;border:1px solid #c0c0c0;border-top-color:#c0c0c0;"></div>
<div class="" style="position:absolute;left:139px;top:563px;width:138px;height:20px;border:1px solid #c0c0c0;border-top-color:#c0c0c0;"></div>
<div class="" style="position:absolute;left:276px;top:563px;width:66px;height:20px;border:1px solid #c0c0c0;border-top-color:#c0c0c0;"></div>
<div class="" style="position:absolute;left:341px;top:563px;width:67px;height:20px;border:1px solid #c0c0c0;border-top-color:#c0c0c0;"></div>
<div class="" style="position:absolute;left:407px;top:563px;width:67px;height:20px;border:1px solid #c0c0c0;border-top-color:#c0c0c0;"></div>
<div class="" style="position:absolute;left:473px;top:563px;width:25px;height:20px;border:1px solid #c0c0c0;border-top-color:#c0c0c0;"></div>
<span class="t " style="left:136px;top:567.69px;font-size:11px;letter-spacing:-0.1px;transform:translateX(-100%);">27026</span>
<span class="t " style="left:142.7px;top:567.69px;font-size:11px;letter-spacing:-0.68px;">NASTROJE</span>
<span class="t " style="left:278px;top:567.69px;font-size:11px;letter-spacing:-0.1px;">27.02.2025</span>
<span class="t " style="left:344px;top:567.69px;font-size:11px;letter-spacing:-0.1px;">14:45:32</span>
<span class="t " style="left:410px;top:567.69px;font-size:11px;letter-spacing:-0.1px;">16:15:29</span>
<svg style="left:479.500px;top:566.8px" width="12.600" height="10.600" viewBox="0 0 13 12" preserveAspectRatio="none"><path d="M0.800 6.800l2.400-1.500 1.600 2.600C6.500 4.500 9 1.800 12 0.200l0.700 1.400C9.800 4 7.500 7.500 5.200 11.800h-1z" fill="#f00"/></svg>
<div class="" style="position:absolute;left:81px;top:582px;width:13px;height:20px;background:#f0f0f0;border:1px solid #000;box-shadow:inset 1px 1px 0 #fff;"></div>
<div class="" style="position:absolute;left:93px;top:582px;width:47px;height:20px;border:1px solid #c0c0c0;border-top-color:#c0c0c0;"></div>
<div class="" style="position:absolute;left:139px;top:582px;width:138px;height:20px;border:1px solid #c0c0c0;border-top-color:#c0c0c0;"></div>
<div class="" style="position:absolute;left:276px;top:582px;width:66px;height:20px;border:1px solid #c0c0c0;border-top-color:#c0c0c0;"></div>
<div class="" style="position:absolute;left:341px;top:582px;width:67px;height:20px;border:1px solid #c0c0c0;border-top-color:#c0c0c0;"></div>
<div class="" style="position:absolute;left:407px;top:582px;width:67px;height:20px;border:1px solid #c0c0c0;border-top-color:#c0c0c0;"></div>
<div class="" style="position:absolute;left:473px;top:582px;width:25px;height:20px;border:1px solid #c0c0c0;border-top-color:#c0c0c0;"></div>
<span class="t " style="left:136px;top:586.69px;font-size:11px;letter-spacing:-0.1px;transform:translateX(-100%);">27027</span>
<span class="t " style="left:142.7px;top:586.69px;font-size:11px;letter-spacing:-0.68px;">NASTROJE</span>
<span class="t " style="left:278px;top:586.69px;font-size:11px;letter-spacing:-0.1px;">27.02.2025</span>
<span class="t " style="left:344px;top:586.69px;font-size:11px;letter-spacing:-0.1px;">16:34:32</span>
<span class="t " style="left:410px;top:586.69px;font-size:11px;letter-spacing:-0.1px;">18:04:29</span>
<svg style="left:479.500px;top:585.8px" width="12.600" height="10.600" viewBox="0 0 13 12" preserveAspectRatio="none"><path d="M0.800 6.800l2.400-1.500 1.600 2.600C6.500 4.500 9 1.800 12 0.200l0.700 1.400C9.800 4 7.500 7.500 5.200 11.800h-1z" fill="#f00"/></svg>
<div class="" style="position:absolute;left:81px;top:601px;width:13px;height:20px;background:#f0f0f0;border:1px solid #000;box-shadow:inset 1px 1px 0 #fff;"></div>
<svg style="left:84px;top:606px" width="7" height="11" viewBox="0 0 7 11"><path d="M0.500 0.500v10l6-5z" fill="#000"/></svg>
<div class="" style="position:absolute;left:94px;top:602px;width:403px;height:18px;background:#0078d7;"></div>
<div class="" style="position:absolute;left:93px;top:601px;width:47px;height:20px;border:1px solid #c0c0c0;border-top-color:#c0c0c0;"></div>
<div class="" style="position:absolute;left:139px;top:601px;width:138px;height:20px;border:1px solid #c0c0c0;border-top-color:#c0c0c0;"></div>
<div class="" style="position:absolute;left:276px;top:601px;width:66px;height:20px;border:1px solid #c0c0c0;border-top-color:#c0c0c0;"></div>
<div class="" style="position:absolute;left:341px;top:601px;width:67px;height:20px;border:1px solid #c0c0c0;border-top-color:#c0c0c0;"></div>
<div class="" style="position:absolute;left:407px;top:601px;width:67px;height:20px;border:1px solid #c0c0c0;border-top-color:#c0c0c0;"></div>
<div class="" style="position:absolute;left:473px;top:601px;width:25px;height:20px;border:1px solid #c0c0c0;border-top-color:#c0c0c0;"></div>
<span class="t " style="left:136px;top:605.69px;font-size:11px;letter-spacing:-0.1px;color:#fff;transform:translateX(-100%);">27028</span>
<span class="t " style="left:142.7px;top:605.69px;font-size:11px;letter-spacing:-0.68px;color:#fff;">NASTROJE</span>
<span class="t " style="left:278px;top:605.69px;font-size:11px;letter-spacing:-0.1px;color:#fff;">27.02.2025</span>
<span class="t " style="left:344px;top:605.69px;font-size:11px;letter-spacing:-0.1px;color:#fff;">19:58:41</span>
<span class="t " style="left:410px;top:605.69px;font-size:11px;letter-spacing:-0.1px;color:#fff;">21:25:24</span>
<svg style="left:479.500px;top:604.8px" width="12.600" height="10.600" viewBox="0 0 13 12" preserveAspectRatio="none"><path d="M0.800 6.800l2.400-1.500 1.600 2.600C6.500 4.500 9 1.800 12 0.200l0.700 1.400C9.800 4 7.500 7.500 5.200 11.800h-1z" fill="#fff"/></svg>
<div class="" style="position:absolute;left:81px;top:620px;width:13px;height:20px;background:#f0f0f0;border:1px solid #000;box-shadow:inset 1px 1px 0 #fff;"></div>
<div class="" style="position:absolute;left:93px;top:620px;width:47px;height:20px;border:1px solid #c0c0c0;border-top-color:#c0c0c0;"></div>
<div class="" style="position:absolute;left:139px;top:620px;width:138px;height:20px;border:1px solid #c0c0c0;border-top-color:#c0c0c0;"></div>
<div class="" style="position:absolute;left:276px;top:620px;width:66px;height:20px;border:1px solid #c0c0c0;border-top-color:#c0c0c0;"></div>
<div class="" style="position:absolute;left:341px;top:620px;width:67px;height:20px;border:1px solid #c0c0c0;border-top-color:#c0c0c0;"></div>
<div class="" style="position:absolute;left:407px;top:620px;width:67px;height:20px;border:1px solid #c0c0c0;border-top-color:#c0c0c0;"></div>
<div class="" style="position:absolute;left:473px;top:620px;width:25px;height:20px;border:1px solid #c0c0c0;border-top-color:#c0c0c0;"></div>
<span class="t " style="left:136px;top:624.69px;font-size:11px;letter-spacing:-0.1px;transform:translateX(-100%);">27029</span>
<span class="t " style="left:142.7px;top:624.69px;font-size:11px;letter-spacing:-0.68px;">NASTROJE</span>
<span class="t " style="left:278px;top:624.69px;font-size:11px;letter-spacing:-0.1px;">28.02.2025</span>
<span class="t " style="left:344px;top:624.69px;font-size:11px;letter-spacing:-0.1px;">01:29:41</span>
<span class="t " style="left:410px;top:624.69px;font-size:11px;letter-spacing:-0.1px;">02:55:50</span>
<svg style="left:479.500px;top:623.8px" width="12.600" height="10.600" viewBox="0 0 13 12" preserveAspectRatio="none"><path d="M0.800 6.800l2.400-1.500 1.600 2.600C6.500 4.500 9 1.800 12 0.200l0.700 1.400C9.800 4 7.500 7.500 5.200 11.800h-1z" fill="#f00"/></svg>
<div class="" style="position:absolute;left:81px;top:639px;width:13px;height:20px;background:#f0f0f0;border:1px solid #000;box-shadow:inset 1px 1px 0 #fff;"></div>
<div class="" style="position:absolute;left:93px;top:639px;width:47px;height:20px;border:1px solid #c0c0c0;border-top-color:#c0c0c0;"></div>
<div class="" style="position:absolute;left:139px;top:639px;width:138px;height:20px;border:1px solid #c0c0c0;border-top-color:#c0c0c0;"></div>
<div class="" style="position:absolute;left:276px;top:639px;width:66px;height:20px;border:1px solid #c0c0c0;border-top-color:#c0c0c0;"></div>
<div class="" style="position:absolute;left:341px;top:639px;width:67px;height:20px;border:1px solid #c0c0c0;border-top-color:#c0c0c0;"></div>
<div class="" style="position:absolute;left:407px;top:639px;width:67px;height:20px;border:1px solid #c0c0c0;border-top-color:#c0c0c0;"></div>
<div class="" style="position:absolute;left:473px;top:639px;width:25px;height:20px;border:1px solid #c0c0c0;border-top-color:#c0c0c0;"></div>
<span class="t " style="left:136px;top:643.69px;font-size:11px;letter-spacing:-0.1px;transform:translateX(-100%);">27030</span>
<span class="t " style="left:142.7px;top:643.69px;font-size:11px;letter-spacing:-0.68px;">NASTROJE</span>
<span class="t " style="left:278px;top:643.69px;font-size:11px;letter-spacing:-0.1px;">28.02.2025</span>
<span class="t " style="left:344px;top:643.69px;font-size:11px;letter-spacing:-0.1px;">10:59:51</span>
<span class="t " style="left:410px;top:643.69px;font-size:11px;letter-spacing:-0.1px;">12:26:42</span>
<svg style="left:479.500px;top:642.8px" width="12.600" height="10.600" viewBox="0 0 13 12" preserveAspectRatio="none"><path d="M0.800 6.800l2.400-1.500 1.600 2.600C6.500 4.500 9 1.800 12 0.200l0.700 1.400C9.800 4 7.500 7.500 5.200 11.800h-1z" fill="#f00"/></svg>
<div class="" style="position:absolute;left:81px;top:658px;width:13px;height:20px;background:#f0f0f0;border:1px solid #000;box-shadow:inset 1px 1px 0 #fff;"></div>
<div class="" style="position:absolute;left:93px;top:658px;width:47px;height:20px;border:1px solid #c0c0c0;border-top-color:#c0c0c0;"></div>
<div class="" style="position:absolute;left:139px;top:658px;width:138px;height:20px;border:1px solid #c0c0c0;border-top-color:#c0c0c0;"></div>
<div class="" style="position:absolute;left:276px;top:658px;width:66px;height:20px;border:1px solid #c0c0c0;border-top-color:#c0c0c0;"></div>
<div class="" style="position:absolute;left:341px;top:658px;width:67px;height:20px;border:1px solid #c0c0c0;border-top-color:#c0c0c0;"></div>
<div class="" style="position:absolute;left:407px;top:658px;width:67px;height:20px;border:1px solid #c0c0c0;border-top-color:#c0c0c0;"></div>
<div class="" style="position:absolute;left:473px;top:658px;width:25px;height:20px;border:1px solid #c0c0c0;border-top-color:#c0c0c0;"></div>
<span class="t " style="left:136px;top:662.69px;font-size:11px;letter-spacing:-0.1px;transform:translateX(-100%);">27031</span>
<span class="t " style="left:142.7px;top:662.69px;font-size:11px;letter-spacing:-0.68px;">NASTROJE</span>
<span class="t " style="left:278px;top:662.69px;font-size:11px;letter-spacing:-0.1px;">28.02.2025</span>
<span class="t " style="left:344px;top:662.69px;font-size:11px;letter-spacing:-0.1px;">12:46:49</span>
<span class="t " style="left:410px;top:662.69px;font-size:11px;letter-spacing:-0.1px;">14:13:53</span>
<svg style="left:479.500px;top:661.8px" width="12.600" height="10.600" viewBox="0 0 13 12" preserveAspectRatio="none"><path d="M0.800 6.800l2.400-1.500 1.600 2.600C6.500 4.500 9 1.800 12 0.200l0.700 1.400C9.800 4 7.500 7.500 5.200 11.800h-1z" fill="#f00"/></svg>
<div class="" style="position:absolute;left:81px;top:677px;width:13px;height:20px;background:#f0f0f0;border:1px solid #000;box-shadow:inset 1px 1px 0 #fff;"></div>
<div class="" style="position:absolute;left:93px;top:677px;width:47px;height:20px;border:1px solid #c0c0c0;border-top-color:#c0c0c0;"></div>
<div class="" style="position:absolute;left:139px;top:677px;width:138px;height:20px;border:1px solid #c0c0c0;border-top-color:#c0c0c0;"></div>
<div class="" style="position:absolute;left:276px;top:677px;width:66px;height:20px;border:1px solid #c0c0c0;border-top-color:#c0c0c0;"></div>
<div class="" style="position:absolute;left:341px;top:677px;width:67px;height:20px;border:1px solid #c0c0c0;border-top-color:#c0c0c0;"></div>
<div class="" style="position:absolute;left:407px;top:677px;width:67px;height:20px;border:1px solid #c0c0c0;border-top-color:#c0c0c0;"></div>
<div class="" style="position:absolute;left:473px;top:677px;width:25px;height:20px;border:1px solid #c0c0c0;border-top-color:#c0c0c0;"></div>
<span class="t " style="left:136px;top:681.69px;font-size:11px;letter-spacing:-0.1px;transform:translateX(-100%);">27032</span>
<span class="t " style="left:142.7px;top:681.69px;font-size:11px;letter-spacing:-0.68px;">NASTROJE</span>
<span class="t " style="left:278px;top:681.69px;font-size:11px;letter-spacing:-0.1px;">28.02.2025</span>
<span class="t " style="left:344px;top:681.69px;font-size:11px;letter-spacing:-0.1px;">14:33:19</span>
<span class="t " style="left:410px;top:681.69px;font-size:11px;letter-spacing:-0.1px;">15:58:22</span>
<svg style="left:479.500px;top:680.8px" width="12.600" height="10.600" viewBox="0 0 13 12" preserveAspectRatio="none"><path d="M0.800 6.800l2.400-1.500 1.600 2.600C6.500 4.500 9 1.800 12 0.200l0.700 1.400C9.800 4 7.500 7.500 5.200 11.800h-1z" fill="#f00"/></svg>
<div class="" style="position:absolute;left:81px;top:696px;width:13px;height:20px;background:#f0f0f0;border:1px solid #000;box-shadow:inset 1px 1px 0 #fff;"></div>
<div class="" style="position:absolute;left:93px;top:696px;width:47px;height:20px;border:1px solid #c0c0c0;border-top-color:#c0c0c0;"></div>
<div class="" style="position:absolute;left:139px;top:696px;width:138px;height:20px;border:1px solid #c0c0c0;border-top-color:#c0c0c0;"></div>
<div class="" style="position:absolute;left:276px;top:696px;width:66px;height:20px;border:1px solid #c0c0c0;border-top-color:#c0c0c0;"></div>
<div class="" style="position:absolute;left:341px;top:696px;width:67px;height:20px;border:1px solid #c0c0c0;border-top-color:#c0c0c0;"></div>
<div class="" style="position:absolute;left:407px;top:696px;width:67px;height:20px;border:1px solid #c0c0c0;border-top-color:#c0c0c0;"></div>
<div class="" style="position:absolute;left:473px;top:696px;width:25px;height:20px;border:1px solid #c0c0c0;border-top-color:#c0c0c0;"></div>
<span class="t " style="left:136px;top:700.69px;font-size:11px;letter-spacing:-0.1px;transform:translateX(-100%);">27033</span>
<span class="t " style="left:142.7px;top:700.69px;font-size:11px;letter-spacing:-0.68px;">NASTROJE</span>
<span class="t " style="left:278px;top:700.69px;font-size:11px;letter-spacing:-0.1px;">28.02.2025</span>
<span class="t " style="left:344px;top:700.69px;font-size:11px;letter-spacing:-0.1px;">16:10:51</span>
<span class="t " style="left:410px;top:700.69px;font-size:11px;letter-spacing:-0.1px;">17:37:40</span>
<svg style="left:479.500px;top:699.8px" width="12.600" height="10.600" viewBox="0 0 13 12" preserveAspectRatio="none"><path d="M0.800 6.800l2.400-1.500 1.600 2.600C6.500 4.500 9 1.800 12 0.200l0.700 1.400C9.800 4 7.500 7.500 5.200 11.800h-1z" fill="#f00"/></svg>
<div class="" style="position:absolute;left:81px;top:715px;width:13px;height:20px;background:#f0f0f0;border:1px solid #000;box-shadow:inset 1px 1px 0 #fff;"></div>
<div class="" style="position:absolute;left:93px;top:715px;width:47px;height:20px;border:1px solid #c0c0c0;border-top-color:#c0c0c0;"></div>
<div class="" style="position:absolute;left:139px;top:715px;width:138px;height:20px;border:1px solid #c0c0c0;border-top-color:#c0c0c0;"></div>
<div class="" style="position:absolute;left:276px;top:715px;width:66px;height:20px;border:1px solid #c0c0c0;border-top-color:#c0c0c0;"></div>
<div class="" style="position:absolute;left:341px;top:715px;width:67px;height:20px;border:1px solid #c0c0c0;border-top-color:#c0c0c0;"></div>
<div class="" style="position:absolute;left:407px;top:715px;width:67px;height:20px;border:1px solid #c0c0c0;border-top-color:#c0c0c0;"></div>
<div class="" style="position:absolute;left:473px;top:715px;width:25px;height:20px;border:1px solid #c0c0c0;border-top-color:#c0c0c0;"></div>
<span class="t " style="left:136px;top:719.69px;font-size:11px;letter-spacing:-0.1px;transform:translateX(-100%);">27034</span>
<span class="t " style="left:142.7px;top:719.69px;font-size:11px;letter-spacing:-0.68px;">NASTROJE</span>
<span class="t " style="left:278px;top:719.69px;font-size:11px;letter-spacing:-0.1px;">28.02.2025</span>
<span class="t " style="left:344px;top:719.69px;font-size:11px;letter-spacing:-0.1px;">18:15:02</span>
<span class="t " style="left:410px;top:719.69px;font-size:11px;letter-spacing:-0.1px;">19:41:51</span>
<svg style="left:479.500px;top:718.8px" width="12.600" height="10.600" viewBox="0 0 13 12" preserveAspectRatio="none"><path d="M0.800 6.800l2.400-1.500 1.600 2.600C6.500 4.500 9 1.800 12 0.200l0.700 1.400C9.800 4 7.500 7.500 5.200 11.800h-1z" fill="#f00"/></svg>
<div class="" style="position:absolute;left:81px;top:734px;width:13px;height:20px;background:#f0f0f0;border:1px solid #000;box-shadow:inset 1px 1px 0 #fff;"></div>
<div class="" style="position:absolute;left:93px;top:734px;width:47px;height:20px;border:1px solid #c0c0c0;border-top-color:#c0c0c0;"></div>
<div class="" style="position:absolute;left:139px;top:734px;width:138px;height:20px;border:1px solid #c0c0c0;border-top-color:#c0c0c0;"></div>
<div class="" style="position:absolute;left:276px;top:734px;width:66px;height:20px;border:1px solid #c0c0c0;border-top-color:#c0c0c0;"></div>
<div class="" style="position:absolute;left:341px;top:734px;width:67px;height:20px;border:1px solid #c0c0c0;border-top-color:#c0c0c0;"></div>
<div class="" style="position:absolute;left:407px;top:734px;width:67px;height:20px;border:1px solid #c0c0c0;border-top-color:#c0c0c0;"></div>
<div class="" style="position:absolute;left:473px;top:734px;width:25px;height:20px;border:1px solid #c0c0c0;border-top-color:#c0c0c0;"></div>
<span class="t " style="left:136px;top:738.69px;font-size:11px;letter-spacing:-0.1px;transform:translateX(-100%);">27035</span>
<span class="t " style="left:142.7px;top:738.69px;font-size:11px;letter-spacing:-0.68px;">NASTROJE</span>
<span class="t " style="left:278px;top:738.69px;font-size:11px;letter-spacing:-0.1px;">28.02.2025</span>
<span class="t " style="left:344px;top:738.69px;font-size:11px;letter-spacing:-0.1px;">20:37:12</span>
<span class="t " style="left:410px;top:738.69px;font-size:11px;letter-spacing:-0.1px;">22:03:03</span>
<svg style="left:479.500px;top:737.8px" width="12.600" height="10.600" viewBox="0 0 13 12" preserveAspectRatio="none"><path d="M0.800 6.800l2.400-1.500 1.600 2.600C6.500 4.500 9 1.800 12 0.200l0.700 1.400C9.800 4 7.500 7.500 5.200 11.800h-1z" fill="#f00"/></svg>
<div class="" style="position:absolute;left:81px;top:753px;width:13px;height:20px;background:#f0f0f0;border:1px solid #000;box-shadow:inset 1px 1px 0 #fff;"></div>
<div class="" style="position:absolute;left:93px;top:753px;width:47px;height:20px;border:1px solid #c0c0c0;border-top-color:#c0c0c0;"></div>
<div class="" style="position:absolute;left:139px;top:753px;width:138px;height:20px;border:1px solid #c0c0c0;border-top-color:#c0c0c0;"></div>
<div class="" style="position:absolute;left:276px;top:753px;width:66px;height:20px;border:1px solid #c0c0c0;border-top-color:#c0c0c0;"></div>
<div class="" style="position:absolute;left:341px;top:753px;width:67px;height:20px;border:1px solid #c0c0c0;border-top-color:#c0c0c0;"></div>
<div class="" style="position:absolute;left:407px;top:753px;width:67px;height:20px;border:1px solid #c0c0c0;border-top-color:#c0c0c0;"></div>
<div class="" style="position:absolute;left:473px;top:753px;width:25px;height:20px;border:1px solid #c0c0c0;border-top-color:#c0c0c0;"></div>
<span class="t " style="left:136px;top:757.69px;font-size:11px;letter-spacing:-0.1px;transform:translateX(-100%);">27036</span>
<span class="t " style="left:142.7px;top:757.69px;font-size:11px;letter-spacing:-0.68px;">NASTROJE</span>
<span class="t " style="left:278px;top:757.69px;font-size:11px;letter-spacing:-0.1px;">28.02.2025</span>
<span class="t " style="left:344px;top:757.69px;font-size:11px;letter-spacing:-0.1px;">22:24:35</span>
<span class="t " style="left:410px;top:757.69px;font-size:11px;letter-spacing:-0.1px;">23:50:36</span>
<svg style="left:479.500px;top:756.8px" width="12.600" height="10.600" viewBox="0 0 13 12" preserveAspectRatio="none"><path d="M0.800 6.800l2.400-1.500 1.600 2.600C6.500 4.500 9 1.800 12 0.200l0.700 1.400C9.800 4 7.500 7.500 5.200 11.800h-1z" fill="#f00"/></svg>
<div class="" style="position:absolute;left:93px;top:411px;width:405px;height:1px;background:#000;"></div>
<div class="etch" style="position:absolute;left:549px;top:225px;width:821px;height:668px;"></div>
<span class="t " style="left:555.5px;top:233.69px;font-size:11px;letter-spacing:-0.2px;">Program</span>
<span class="t " style="left:616px;top:233.42px;font-size:12.5px;letter-spacing:-0.6px;font-weight:bold;">NASTROJE</span>
<span class="t " style="left:555.5px;top:253.69px;font-size:11px;letter-spacing:-0.2px;">Datum:</span>
<span class="t " style="left:616px;top:253.42px;font-size:12.5px;letter-spacing:0.1px;font-weight:bold;">27.02.2025</span>
<span class="t " style="left:555.5px;top:273.69px;font-size:11px;letter-spacing:-0.2px;">Čas startu:</span>
<span class="t " style="left:616px;top:273.42px;font-size:12.5px;letter-spacing:-0.35px;font-weight:bold;">19:58:41</span>
<span class="t " style="left:555.5px;top:293.69px;font-size:11px;letter-spacing:-0.2px;">Čas konce:</span>
<span class="t " style="left:616px;top:293.42px;font-size:12.5px;letter-spacing:-0.35px;font-weight:bold;">21:25:24</span>
<span class="t " style="left:555.5px;top:313.69px;font-size:11px;letter-spacing:-0.2px;">Šarže:</span>
<span class="t " style="left:616px;top:313.42px;font-size:12.5px;font-weight:bold;">27028</span>
<div class="" style="position:absolute;left:550px;top:333px;width:819px;height:538px;border:1px solid;border-color:#fff #696969 transparent #fff;box-shadow:inset -1px 0 0 #a0a0a0;"></div>
<div class="" style="position:absolute;left:555px;top:337px;width:334px;height:531px;background:#fff;border:1px solid;border-color:#696969 #e3e3e3 #e3e3e3 #696969;box-shadow:-1px -1px 0 #a0a0a0;"></div>
<div class="" style="position:absolute;left:872px;top:338px;width:16px;height:529px;background:#f0f0f0;"></div>
<svg style="left:875px;top:343px" width="10" height="7" viewBox="0 0 10 7"><path d="M0 6.500h10l-5-6z" fill="#a0a0a0"/></svg>
<svg style="left:875px;top:855px" width="10" height="7" viewBox="0 0 10 7"><path d="M0 0.500h10l-5 6z" fill="#a0a0a0"/></svg>
<span class="t " style="left:560.3px;top:340.59px;font-size:11px;letter-spacing:-0.13px;">Datum:</span>
<span class="t " style="left:599px;top:340.59px;font-size:11px;letter-spacing:-0.13px;">27.02.2025</span>
<span class="t " style="left:560.3px;top:354.59px;font-size:11px;letter-spacing:-0.13px;">Číslo přístroje:</span>
<span class="t " style="left:634.5px;top:354.59px;font-size:11px;letter-spacing:-0.13px;">74348381</span>
<span class="t " style="left:560.3px;top:368.59px;font-size:11px;letter-spacing:-0.13px;">Číslo šarže:</span>
<span class="t " style="left:635.3px;top:368.59px;font-size:11px;letter-spacing:-0.13px;">27028</span>
<span class="t " style="left:560.3px;top:382.59px;font-size:11px;letter-spacing:-0.13px;">19:58:41</span>
<span class="t " style="left:608.3px;top:382.59px;font-size:11px;letter-spacing:-0.13px;">start programu:</span>
<span class="t " style="left:608.3px;top:396.59px;font-size:11px;letter-spacing:-0.65px;">NASTROJE</span>
<span class="t " style="left:560.3px;top:410.59px;font-size:11px;letter-spacing:-0.13px;">19:58:41</span>
<span class="t " style="left:608.3px;top:410.59px;font-size:11px;letter-spacing:-0.13px;">předmytí I</span>
<span class="t " style="left:560.3px;top:424.59px;font-size:11px;letter-spacing:-0.13px;">20:00:38</span>
<span class="t " style="left:608.3px;top:424.59px;font-size:11px;letter-spacing:-0.13px;">napouštění vody:</span>
<span class="t " style="left:697.2px;top:424.59px;font-size:11px;letter-spacing:-0.13px;">01:52/35 L/16 °C</span>
<span class="t " style="left:560.3px;top:438.59px;font-size:11px;letter-spacing:-0.13px;">20:01:26</span>
<span class="t " style="left:608.3px;top:438.59px;font-size:11px;letter-spacing:-0.13px;">předmytí II</span>
<span class="t " style="left:560.3px;top:452.59px;font-size:11px;letter-spacing:-0.13px;">20:03:30</span>
<span class="t " style="left:608.3px;top:452.59px;font-size:11px;letter-spacing:-0.13px;">napouštění vody:</span>
<span class="t " style="left:697.2px;top:452.59px;font-size:11px;letter-spacing:-0.13px;">02:03/38 L/13 °C</span>
<span class="t " style="left:560.3px;top:466.59px;font-size:11px;letter-spacing:-0.13px;">20:06:21</span>
<span class="t " style="left:608.3px;top:466.59px;font-size:11px;letter-spacing:-0.13px;">čištění</span>
<span class="t " style="left:560.3px;top:480.59px;font-size:11px;letter-spacing:-0.13px;">20:08:34</span>
<span class="t " style="left:608.3px;top:480.59px;font-size:11px;letter-spacing:-0.13px;">napouštění vody:</span>
<span class="t " style="left:697.2px;top:480.59px;font-size:11px;letter-spacing:-0.13px;">02:12/40 L/12 °C</span>
<span class="t " style="left:560.3px;top:494.59px;font-size:11px;letter-spacing:-0.13px;">20:16:41</span>
<span class="t " style="left:608.3px;top:494.59px;font-size:11px;letter-spacing:-0.24px;">DOS1/40 °C/00:00/0.50 %/200 ml</span>
<span class="t " style="left:608.3px;top:508.59px;font-size:11px;letter-spacing:-0.13px;">kontrola DOS1: 205 ml</span>
<span class="t " style="left:560.3px;top:522.59px;font-size:11px;letter-spacing:-0.13px;">20:20:45</span>
<span class="t " style="left:608.3px;top:522.59px;font-size:11px;letter-spacing:-0.24px;">akt.= 56.0 °C nast.= 55 °C</span>
<span class="t " style="left:560.3px;top:536.59px;font-size:11px;letter-spacing:-0.13px;">20:26:18</span>
<span class="t " style="left:608.3px;top:536.59px;font-size:11px;letter-spacing:-0.24px;">55 °C/05:00</span>
<span class="t " style="left:560.3px;top:550.59px;font-size:11px;letter-spacing:-0.13px;">20:26:18</span>
<span class="t " style="left:608.3px;top:550.59px;font-size:11px;letter-spacing:-0.24px;">min/max: 55.7 °C - 56.0 °C</span>
<span class="t " style="left:560.3px;top:564.59px;font-size:11px;letter-spacing:-0.13px;">20:27:10</span>
<span class="t " style="left:608.3px;top:564.59px;font-size:11px;letter-spacing:-0.13px;">oplach II</span>
<span class="t " style="left:560.3px;top:578.59px;font-size:11px;letter-spacing:-0.13px;">20:30:05</span>
<span class="t " style="left:608.3px;top:578.59px;font-size:11px;letter-spacing:-0.13px;">napouštění vody:</span>
<span class="t " style="left:697.2px;top:578.59px;font-size:11px;letter-spacing:-0.13px;">02:53/34 L/28 °C</span>
<span class="t " style="left:560.3px;top:592.59px;font-size:11px;letter-spacing:-0.13px;">20:31:51</span>
<span class="t " style="left:608.3px;top:592.59px;font-size:11px;letter-spacing:-0.13px;">termická dezin. II</span>
<span class="t " style="left:560.3px;top:606.59px;font-size:11px;letter-spacing:-0.13px;">20:34:44</span>
<span class="t " style="left:608.3px;top:606.59px;font-size:11px;letter-spacing:-0.13px;">napouštění vody:</span>
<span class="t " style="left:697.2px;top:606.59px;font-size:11px;letter-spacing:-0.13px;">02:51/35 L/50 °C</span>
<span class="t " style="left:560.3px;top:620.59px;font-size:11px;letter-spacing:-0.13px;">20:46:39</span>
<span class="t " style="left:608.3px;top:620.59px;font-size:11px;letter-spacing:-0.24px;">akt.= 93.8 °C nast.= 93 °C</span>
<span class="t " style="left:560.3px;top:634.59px;font-size:11px;letter-spacing:-0.13px;">20:53:56</span>
<span class="t " style="left:608.3px;top:634.59px;font-size:11px;letter-spacing:-0.24px;">93 °C/06:01</span>
<span class="t " style="left:560.3px;top:648.59px;font-size:11px;letter-spacing:-0.13px;">20:53:56</span>
<span class="t " style="left:608.3px;top:648.59px;font-size:11px;letter-spacing:-0.24px;">min/max: 92.3 °C - 94.0 °C</span>
<span class="t " style="left:560.3px;top:662.59px;font-size:11px;letter-spacing:-0.13px;">20:54:42</span>
<span class="t " style="left:608.3px;top:662.59px;font-size:11px;letter-spacing:-0.13px;">sušení</span>
<span class="t " style="left:560.3px;top:676.59px;font-size:11px;letter-spacing:-0.13px;">21:01:35</span>
<span class="t " style="left:608.3px;top:676.59px;font-size:11px;letter-spacing:-0.24px;">110 °C</span>
<span class="t " style="left:560.3px;top:690.59px;font-size:11px;letter-spacing:-0.13px;">Procesní parametry splněny.</span>
<span class="t " style="left:560.3px;top:704.59px;font-size:11px;letter-spacing:-0.13px;">Otáčky ramen v pořádku.</span>
<span class="t " style="left:560.3px;top:718.59px;font-size:11px;letter-spacing:-0.13px;">21:25:24</span>
<span class="t " style="left:608.3px;top:718.59px;font-size:11px;letter-spacing:-0.13px;">konec programu:</span>
<div class="" style="position:absolute;left:894px;top:336px;width:473px;height:532px;background:#fff;border:1px solid;border-color:#a0a0a0 #fff #fff #a0a0a0;box-shadow:inset 1px 1px 0 #696969, inset -1px -1px 0 #e3e3e3;"></div>
<div class="" style="position:absolute;left:1347px;top:338px;width:17px;height:528px;background:#f0f0f0;"></div>
<div class="" style="position:absolute;left:1346px;top:355px;width:17px;height:462px;background:#f0f0f0;border:1px solid #a6a6a6;box-shadow:inset 1px 1px 0 #fff;"></div>
<svg style="left:0;top:0" width="1448" height="1080" viewBox="0 0 1448 1080"><defs><clipPath id="gc"><rect x="896" y="338" width="450" height="528.500"/></clipPath></defs><g clip-path="url(#gc)"><path d="M956.5 359V870" stroke="#000" stroke-width="1" stroke-dasharray="3 3" fill="none"/><path d="M986.5 359V870" stroke="#000" stroke-width="1" stroke-dasharray="3 3" fill="none"/><path d="M1016.5 359V870" stroke="#000" stroke-width="1" stroke-dasharray="3 3" fill="none"/><path d="M1046.5 359V870" stroke="#000" stroke-width="1" stroke-dasharray="3 3" fill="none"/><path d="M1076.5 359V870" stroke="#000" stroke-width="1" stroke-dasharray="3 3" fill="none"/><path d="M1106.5 359V870" stroke="#000" stroke-width="1" stroke-dasharray="3 3" fill="none"/><path d="M1136.5 359V870" stroke="#000" stroke-width="1" stroke-dasharray="3 3" fill="none"/><path d="M1166.5 359V870" stroke="#000" stroke-width="1" stroke-dasharray="3 3" fill="none"/><path d="M1226.5 359V870" stroke="#000" stroke-width="1" stroke-dasharray="3 3" fill="none"/><path d="M1256.5 359V870" stroke="#000" stroke-width="1" stroke-dasharray="3 3" fill="none"/><path d="M927 388.5H1286" stroke="#000" stroke-width="1" stroke-dasharray="3 3" fill="none"/><path d="M927 418.5H1286" stroke="#000" stroke-width="1" stroke-dasharray="3 3" fill="none"/><path d="M927 448.5H1286" stroke="#000" stroke-width="1" stroke-dasharray="3 3" fill="none"/><path d="M927 478.5H1286" stroke="#000" stroke-width="1" stroke-dasharray="3 3" fill="none"/><path d="M927 508.5H1286" stroke="#000" stroke-width="1" stroke-dasharray="3 3" fill="none"/><path d="M927 538.5H1286" stroke="#000" stroke-width="1" stroke-dasharray="3 3" fill="none"/><path d="M927 568.5H1286" stroke="#000" stroke-width="1" stroke-dasharray="3 3" fill="none"/><path d="M927 598.5H1286" stroke="#000" stroke-width="1" stroke-dasharray="3 3" fill="none"/><path d="M927 628.5H1286" stroke="#000" stroke-width="1" stroke-dasharray="3 3" fill="none"/><path d="M927 658.5H1286" stroke="#000" stroke-width="1" stroke-dasharray="3 3" fill="none"/><path d="M927 688.5H1286" stroke="#000" stroke-width="1" stroke-dasharray="3 3" fill="none"/><path d="M927 718.5H1286" stroke="#000" stroke-width="1" stroke-dasharray="3 3" fill="none"/><path d="M927 748.5H1286" stroke="#000" stroke-width="1" stroke-dasharray="3 3" fill="none"/><path d="M927 778.5H1286" stroke="#000" stroke-width="1" stroke-dasharray="3 3" fill="none"/><path d="M927 808.5H1286" stroke="#000" stroke-width="1" stroke-dasharray="3 3" fill="none"/><path d="M927 838.5H1286" stroke="#000" stroke-width="1" stroke-dasharray="3 3" fill="none"/><path d="M927 868.5H1286" stroke="#000" stroke-width="1" stroke-dasharray="3 3" fill="none"/><path d="M926.5 870V358.5H1286.5V870M1196.5 358.5V870" stroke="#000" stroke-width="1" fill="none"/><polyline points="1051.4,358.5 1050.7,373.3 1045.6,387.2 1036.9,401.0 1023.1,420.0 1013.5,439.0 1009.3,452.8 1008.6,463.1 1012.8,476.9 1021.4,494.2 1033.5,511.5 1043.8,528.7 1050.7,542.5 1052.5,556.4 1050.1,568.4 1047.3,580.5 1050.7,594.3 1054.2,602.1 1064.6,615.9 1078.4,629.7 1099.1,645.2 1119.8,660.8 1131.9,674.6 1140.5,688.4 1142.3,692.9 1126.7,697.7 1106.0,701.2 1092.2,705.7 1057.7,708.1 1046.6,711.5 1064.6,713.3 1092.2,715.0 1119.8,718.8 1161.2,721.2 1195.8,725.4 1216.5,729.8 1251.0,731.6 1263.1,732.6 1255.2,735.0 1267.6,737.4 1256.2,739.5 1266.6,741.9 1256.2,744.7 1266.6,748.8 1257.2,751.6 1262.1,755.7 1256.2,759.2 1261.4,762.7 1255.5,766.8 1256.2,776.5 1259.7,786.8 1263.1,800.6 1264.8,814.4 1267.3,838.6 1268.3,876.6" fill="none" stroke="#008000" stroke-width="2" stroke-linejoin="round" shape-rendering="crispEdges"/><polyline points="1020.4,359.5 1036.9,364.7 1064.6,371.6 1092.2,380.2 1126.7,390.6 1161.2,399.2 1188.9,407.9 1201.0,413.1 1202.0,416.5 1199.9,428.6 1198.5,463.1 1197.5,490.7 1195.8,525.3 1194.0,555.7 1161.2,557.0 1126.7,559.8 1088.7,563.3 1050.7,569.5 1017.9,575.3 1021.4,579.8 1019.0,587.4 1019.7,599.5 1019.7,590.0 1019.0,603.8 1020.4,617.6 1019.7,876.6" fill="none" stroke="#ff0000" stroke-width="2" stroke-linejoin="round" shape-rendering="crispEdges"/><polyline points="1012.1,359.5 985.1,362.3 975.5,369.2 978.9,376.1 966.1,379.6 964.4,388.9 967.9,399.2 970.6,405.1 965.1,407.9 962.7,417.5 971.3,421.7 988.6,430.3 1012.8,440.7 1036.9,451.0 1049.0,455.5 1049.0,465.9 1068.0,474.2 1093.9,487.3 1093.9,528.0 1071.5,531.5 1036.9,532.9 1024.8,533.9 1024.8,535.6 1019.7,539.1 1011.0,544.3 1013.5,552.9 1016.2,555.7 1050.7,558.1 1078.4,559.8 1088.7,563.3 1076.6,571.9 1076.6,574.3 1106.0,587.4 1133.6,602.1 1161.2,614.2 1188.9,628.0 1207.9,641.8 1204.4,652.2 1207.9,660.8 1204.4,679.8 1207.9,685.0 1207.9,688.4 1188.9,690.8 1178.5,695.3 1171.6,700.5 1161.2,710.9 1147.4,715.0 1126.7,717.8 1119.8,720.5 1116.4,728.1 1106.0,735.0 1092.2,748.8 1081.8,762.7 1073.2,779.9 1064.6,797.2 1059.4,814.4 1054.2,838.6 1049.7,866.2 1048.7,876.6" fill="none" stroke="#0000ff" stroke-width="2" stroke-linejoin="round" shape-rendering="crispEdges"/></g><path d="M926 341.500H935M935 339.500v4l4.500-2z" stroke="#000" stroke-width="1" fill="#fff"/><path d="M900.500 358V366M898.500 366h4l-2 5z" stroke="#000" stroke-width="1" fill="#fff"/></svg>
<span class="t " style="left:926.5px;top:345.69px;font-size:11px;letter-spacing:-0.18px;">Teplota[°C] 20</span>
<span class="t " style="left:1041px;top:345.69px;font-size:11px;letter-spacing:-0.1px;">40</span>
<span class="t " style="left:1101px;top:345.69px;font-size:11px;letter-spacing:-0.1px;">60</span>
<span class="t " style="left:1161px;top:345.69px;font-size:11px;letter-spacing:-0.1px;">80</span>
<span class="t " style="left:1191px;top:345.69px;font-size:11px;letter-spacing:-0.1px;">90</span>
<span class="t " style="left:1218px;top:345.69px;font-size:11px;letter-spacing:-0.3px;">100</span>
<span class="t " style="left:1276px;top:345.69px;font-size:11px;letter-spacing:-0.3px;">120</span>
<span class="t " style="left:907.5px;top:369.69px;font-size:11px;">čas</span>
<span class="t " style="left:898.5px;top:380.19px;font-size:11px;">[min.]</span>
<span class="t " style="left:905.5px;top:413.19px;font-size:11px;">10</span>
<span class="t " style="left:905.5px;top:473.19px;font-size:11px;">20</span>
<span class="t " style="left:905.5px;top:533.19px;font-size:11px;">30</span>
<span class="t " style="left:905.5px;top:593.19px;font-size:11px;">40</span>
<span class="t " style="left:905.5px;top:653.19px;font-size:11px;">50</span>
<span class="t " style="left:905.5px;top:713.19px;font-size:11px;">60</span>
<span class="t " style="left:905.5px;top:773.19px;font-size:11px;">70</span>
<span class="t " style="left:905.5px;top:833.19px;font-size:11px;">80</span>
<div class="" style="position:absolute;left:551px;top:870px;width:84px;height:1px;background:#696969;"></div>
<div class="" style="position:absolute;left:705px;top:870px;width:664px;height:1px;background:#696969;"></div>
<div class="" style="position:absolute;left:551px;top:869px;width:84px;height:1px;background:#a0a0a0;"></div>
<div class="" style="position:absolute;left:705px;top:869px;width:663px;height:1px;background:#a0a0a0;"></div>
<div class="" style="position:absolute;left:553px;top:871px;width:40px;height:19px;background:#f0f0f0;border:1px solid;border-color:transparent #696969 #696969 #fff;border-top:0;border-radius:0 0 2px 2px;box-shadow:inset -1px -1px 0 #a0a0a0;"></div>
<span class="t " style="left:558px;top:875.19px;font-size:11px;">Text</span>
<div class="" style="position:absolute;left:595px;top:871px;width:39px;height:19px;background:#f0f0f0;border:1px solid;border-color:transparent #696969 #696969 #fff;border-top:0;border-radius:0 0 2px 2px;box-shadow:inset -1px -1px 0 #a0a0a0;"></div>
<span class="t " style="left:599.7px;top:875.19px;font-size:11px;">Graf</span>
<div class="" style="position:absolute;left:635px;top:869px;width:70px;height:23px;background:#f0f0f0;border:1px solid;border-color:transparent #696969 #696969 #fff;border-top:0;border-radius:0 0 2px 2px;box-shadow:inset -1px -1px 0 #a0a0a0;"></div>
<span class="t " style="left:642.5px;top:876.99px;font-size:11px;">Text + Graf</span>
<div class="" style="position:absolute;left:75px;top:898px;width:1299px;height:1px;background:#dcdcdc;"></div>
<div class="" style="position:absolute;left:76px;top:899px;width:158px;height:18px;border:1px solid;border-color:#a0a0a0 #fff #fff #a0a0a0;"></div>
<div class="" style="position:absolute;left:237px;top:899px;width:158px;height:18px;border:1px solid;border-color:#a0a0a0 #fff #fff #a0a0a0;"></div>
<div class="" style="position:absolute;left:397px;top:899px;width:135px;height:18px;border:1px solid;border-color:#a0a0a0 #fff #fff #a0a0a0;"></div>
<div class="" style="position:absolute;left:534px;top:899px;width:135px;height:18px;border:1px solid;border-color:#a0a0a0 #fff #fff #a0a0a0;"></div>
<div class="" style="position:absolute;left:671px;top:899px;width:703px;height:18px;border:1px solid;border-color:#a0a0a0 #fff #fff #a0a0a0;"></div>
<span class="t " style="left:80px;top:902.40px;font-size:11.7px;letter-spacing:-0.11px;">Archiv - Verze 3.0.0.0</span>
<span class="t " style="left:242px;top:902.40px;font-size:11.7px;letter-spacing:-0.18px;">Skupina: 1</span>
<span class="t " style="left:420px;top:902.40px;font-size:11.7px;">Dynamic COM - OK</span>
<span class="t " style="left:557px;top:902.40px;font-size:11.7px;">Dynamic PG - OK</span>
<span class="t " style="left:676px;top:902.40px;font-size:11.7px;">Sledování chyb zapnuto</span>
<svg style="left:401px;top:901px" width="13" height="12" viewBox="0 0 13 12"><path d="M0.500 6.500l2-1 1.800 3C6 5 8.500 2 11.500 0.500l0.500 1C9 4 6.500 7.500 4.500 11.500z" fill="#0000e0"/></svg>
<svg style="left:538px;top:901px" width="13" height="12" viewBox="0 0 13 12"><path d="M0.500 6.500l2-1 1.800 3C6 5 8.500 2 11.500 0.500l0.500 1C9 4 6.500 7.500 4.500 11.500z" fill="#0000e0"/></svg>
<svg style="left:801px;top:900px" width="26" height="16" viewBox="0 0 26 16"><path d="M0.300 3.700C4 1.500 8 .8 11.500 1.300C17 2 22 6 24.900 14.400L12.100 14.400C8 13.500 4 9 .3 3.700Z" fill="#fff" stroke="#000" stroke-width="1.300" stroke-linejoin="round"/><path d="M10.500 2.600C16 3.400 20.300 6.500 22.800 11" fill="none" stroke="#2db52d" stroke-width="2.200"/><path d="M0.300 3.700C4 1.500 8 .8 11.500 1.300" fill="none" stroke="#000" stroke-width="2.400"/><path d="M11.500 1.300C17 2 22 6 24.900 14.400" fill="none" stroke="#000" stroke-width="1.400"/><path d="M0.300 3.700C4 9 8 13.500 12.100 14.400L24.900 14.400" fill="none" stroke="#000" stroke-width="1.700"/><circle cx="13.500" cy="8.800" r="3.900" fill="#7fd0ee"/><circle cx="14.300" cy="9.600" r="2.600" fill="#d8f2fa"/><circle cx="13.100" cy="8.200" r="1.800" fill="#000"/></svg>
<svg style="left:829px;top:900px" width="18" height="16" viewBox="0 0 18 16"><ellipse cx="6.900" cy="6.400" rx="5.200" ry="5.800" fill="#8c8c8c" transform="rotate(-12 6.900 6.400)"/><ellipse cx="6.500" cy="6.200" rx="4" ry="4.700" fill="#b8b8b8" transform="rotate(-12 6.900 6.400)"/><ellipse cx="6.300" cy="5.900" rx="2.300" ry="2.900" fill="#6a6a6a" transform="rotate(-12 6.900 6.400)"/><circle cx="5.600" cy="5" r="1.100" fill="#f4f4f4"/><path d="M9.500 14.700C12.500 13.500 14.800 11 15.600 8M9 13.300C11.500 12.300 13.500 10 14.200 7.600M8.800 11.800C10.800 11 12.200 9.300 12.800 7.400" fill="none" stroke="#b4b4f4" stroke-width=".8"/><path d="M1.200 3.500C1 6 1.500 8 3 9.500" fill="none" stroke="#9a9ad8" stroke-width=".8"/></svg>
<svg style="left:1361px;top:904px" width="13" height="13" viewBox="0 0 13 13"><path d="M12 1L1 12M12 5L5 12M12 9L9 12" stroke="#a0a0a0" stroke-width="1"/><path d="M12 2L2 12M12 6L6 12M12 10L10 12" stroke="#fff" stroke-width="1"/></svg>
<svg style="left:74px;top:910px" width="8" height="8" viewBox="0 0 8 8"><path d="M0 0V8H8A8 8 0 0 1 0 0Z" fill="#fff"/><path d="M.5 0A7.500 7.500 0 0 0 8 7.500" fill="none" stroke="#a8a8a8" stroke-width="1"/></svg>
</body></html>
